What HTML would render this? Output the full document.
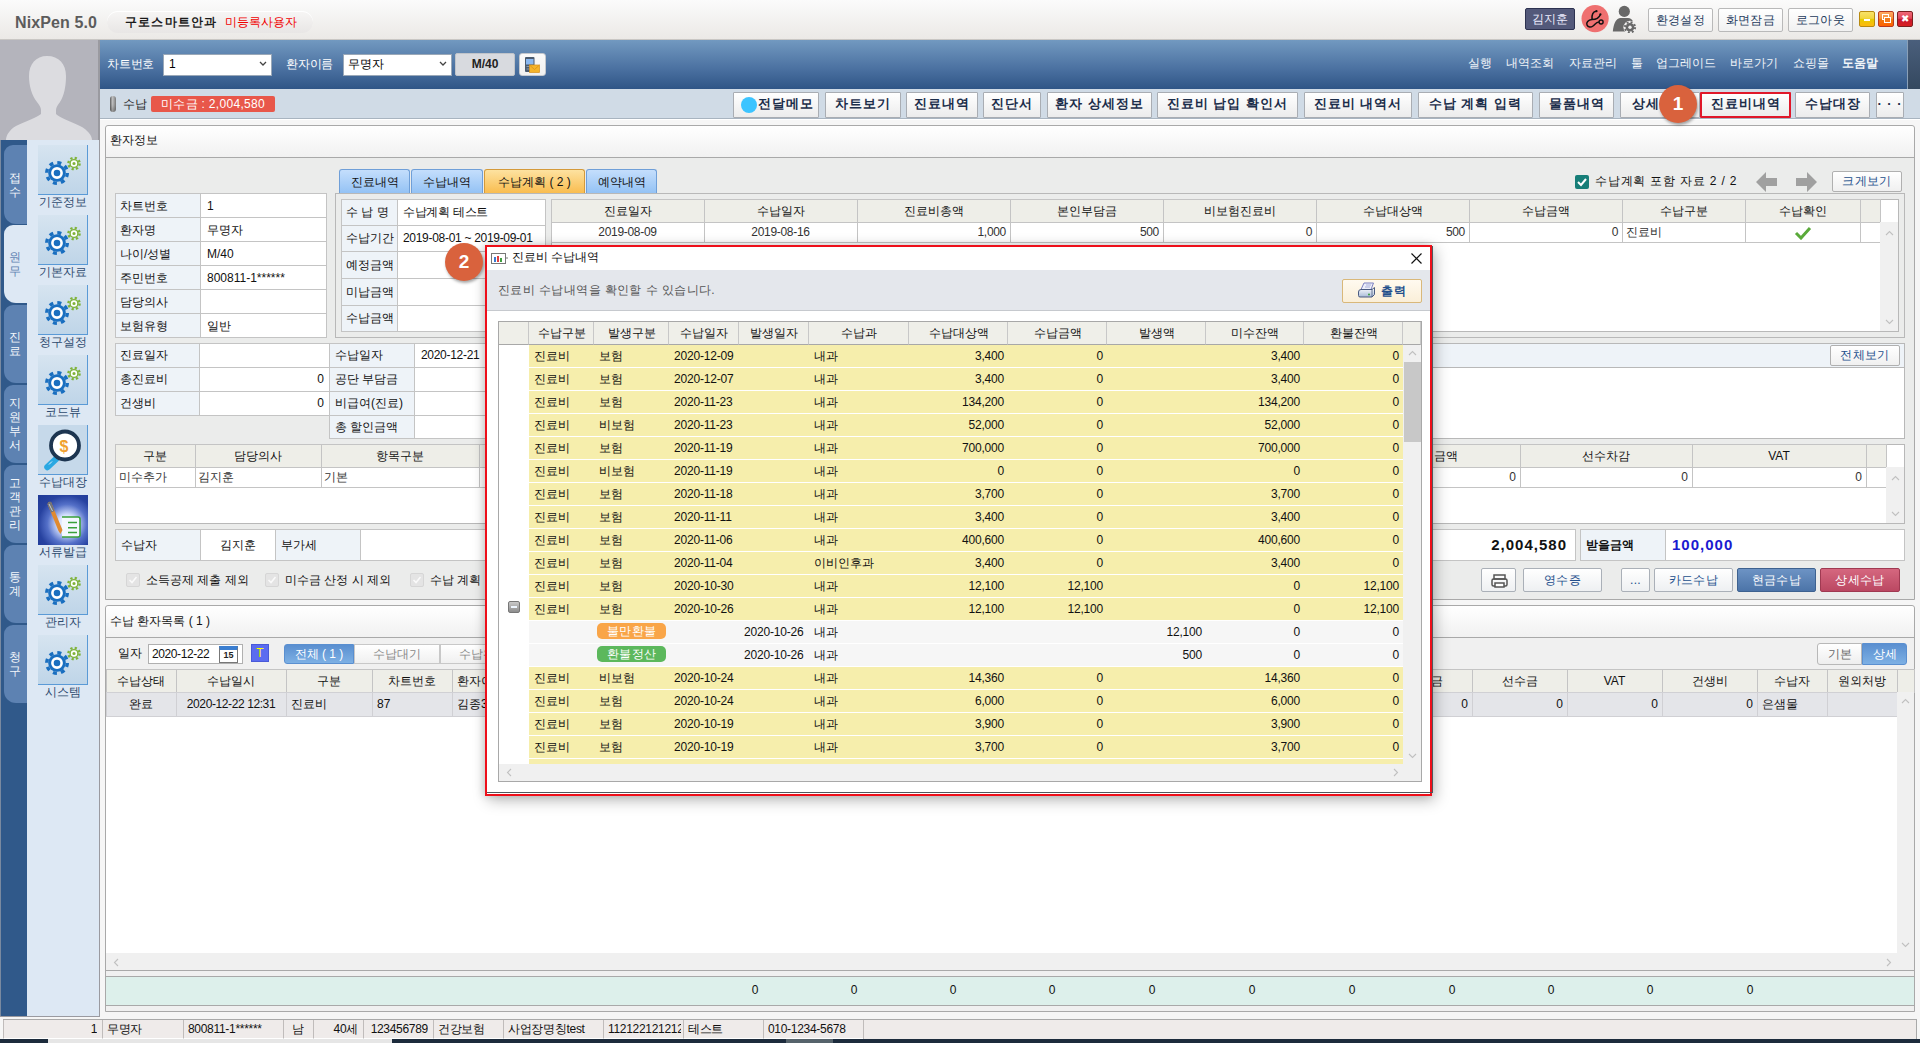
<!DOCTYPE html>
<html><head><meta charset="utf-8"><title>NixPen</title><style>*{box-sizing:border-box;margin:0;padding:0}
html,body{width:1920px;height:1043px;overflow:hidden}
body{position:relative;font-family:"Liberation Sans",sans-serif;font-size:12px;color:#222;background:#f6f6f6}
.a{position:absolute}
.t{white-space:nowrap}
.a>svg{display:block}
</style></head><body>
<div class="a" style="left:0px;top:119px;width:1920px;height:1px;background:#fff"></div>
<div class="a" style="left:100px;top:120px;width:1820px;height:919px;background:#f6f6f6"></div>
<div class="a" style="left:105px;top:125px;width:1810px;height:475px;background:#ebeceb;border:1px solid #a9a9a9;border-radius:3px 3px 0 0"></div>
<div class="a" style="left:106px;top:126px;width:1808px;height:32px;background:linear-gradient(#ffffff,#f1f1f1);border-bottom:1px solid #a9a9a9;border-radius:3px 3px 0 0"></div>
<div class="a t" style="left:110px;top:132.0px;height:16px;line-height:16px;font-size:12px;color:#111">환자정보</div>
<div class="a" style="left:115px;top:193px;width:86px;height:25px;background:#eef3f8;border:1px solid #c4c4c4;"></div>
<div class="a" style="left:200px;top:193px;width:127px;height:25px;background:#fff;border:1px solid #c4c4c4;"></div>
<div class="a t" style="left:120px;top:197.5px;height:16px;line-height:16px;font-size:12px;color:#111">차트번호</div>
<div class="a t" style="left:207px;top:197.5px;height:16px;line-height:16px;font-size:12px;color:#111">1</div>
<div class="a" style="left:115px;top:217px;width:86px;height:25px;background:#eef3f8;border:1px solid #c4c4c4;"></div>
<div class="a" style="left:200px;top:217px;width:127px;height:25px;background:#fff;border:1px solid #c4c4c4;"></div>
<div class="a t" style="left:120px;top:221.5px;height:16px;line-height:16px;font-size:12px;color:#111">환자명</div>
<div class="a t" style="left:207px;top:221.5px;height:16px;line-height:16px;font-size:12px;color:#111">무명자</div>
<div class="a" style="left:115px;top:241px;width:86px;height:25px;background:#eef3f8;border:1px solid #c4c4c4;"></div>
<div class="a" style="left:200px;top:241px;width:127px;height:25px;background:#fff;border:1px solid #c4c4c4;"></div>
<div class="a t" style="left:120px;top:245.5px;height:16px;line-height:16px;font-size:12px;color:#111">나이/성별</div>
<div class="a t" style="left:207px;top:245.5px;height:16px;line-height:16px;font-size:12px;color:#111">M/40</div>
<div class="a" style="left:115px;top:265px;width:86px;height:25px;background:#eef3f8;border:1px solid #c4c4c4;"></div>
<div class="a" style="left:200px;top:265px;width:127px;height:25px;background:#fff;border:1px solid #c4c4c4;"></div>
<div class="a t" style="left:120px;top:269.5px;height:16px;line-height:16px;font-size:12px;color:#111">주민번호</div>
<div class="a t" style="left:207px;top:269.5px;height:16px;line-height:16px;font-size:12px;color:#111">800811-1******</div>
<div class="a" style="left:115px;top:289px;width:86px;height:25px;background:#eef3f8;border:1px solid #c4c4c4;"></div>
<div class="a" style="left:200px;top:289px;width:127px;height:25px;background:#fff;border:1px solid #c4c4c4;"></div>
<div class="a t" style="left:120px;top:293.5px;height:16px;line-height:16px;font-size:12px;color:#111">담당의사</div>
<div class="a t" style="left:207px;top:293.5px;height:16px;line-height:16px;font-size:12px;color:#111"></div>
<div class="a" style="left:115px;top:313px;width:86px;height:25px;background:#eef3f8;border:1px solid #c4c4c4;"></div>
<div class="a" style="left:200px;top:313px;width:127px;height:25px;background:#fff;border:1px solid #c4c4c4;"></div>
<div class="a t" style="left:120px;top:317.5px;height:16px;line-height:16px;font-size:12px;color:#111">보험유형</div>
<div class="a t" style="left:207px;top:317.5px;height:16px;line-height:16px;font-size:12px;color:#111">일반</div>
<div class="a" style="left:339px;top:169px;width:71px;height:25px;background:linear-gradient(#c4defc,#92c1f4);border:1px solid #6f9fd8;border-bottom:none;border-radius:3px 3px 0 0"></div>
<div class="a t" style="left:339px;top:174.0px;width:71px;height:16px;line-height:16px;text-align:center;font-size:12px;color:#111">진료내역</div>
<div class="a" style="left:411px;top:169px;width:72px;height:25px;background:linear-gradient(#c4defc,#92c1f4);border:1px solid #6f9fd8;border-bottom:none;border-radius:3px 3px 0 0"></div>
<div class="a t" style="left:411px;top:174.0px;width:72px;height:16px;line-height:16px;text-align:center;font-size:12px;color:#111">수납내역</div>
<div class="a" style="left:484px;top:169px;width:101px;height:25px;background:linear-gradient(#fde2a0,#f9bb4c);border:1px solid #d49a3a;border-bottom:none;border-radius:3px 3px 0 0"></div>
<div class="a t" style="left:484px;top:174.0px;width:101px;height:16px;line-height:16px;text-align:center;font-size:12px;color:#111">수납계획 ( 2 )</div>
<div class="a" style="left:586px;top:169px;width:71px;height:25px;background:linear-gradient(#c4defc,#92c1f4);border:1px solid #6f9fd8;border-bottom:none;border-radius:3px 3px 0 0"></div>
<div class="a t" style="left:586px;top:174.0px;width:71px;height:16px;line-height:16px;text-align:center;font-size:12px;color:#111">예약내역</div>
<div class="a" style="left:335px;top:193px;width:1570px;height:145px;border:1px solid #b8b8b8;background:#ebeceb"></div>
<div class="a" style="left:341px;top:199px;width:57px;height:27px;background:#eef3f8;border:1px solid #c4c4c4;"></div>
<div class="a" style="left:397px;top:199px;width:149px;height:27px;background:#fff;border:1px solid #c4c4c4;"></div>
<div class="a t" style="left:346px;top:204.0px;height:16px;line-height:16px;font-size:12px;color:#111">수 납 명</div>
<div class="a t" style="left:403px;top:204.0px;height:16px;line-height:16px;font-size:12px;color:#111;letter-spacing:-0.3px">수납계획 테스트</div>
<div class="a" style="left:341px;top:225px;width:57px;height:27px;background:#eef3f8;border:1px solid #c4c4c4;"></div>
<div class="a" style="left:397px;top:225px;width:149px;height:27px;background:#fff;border:1px solid #c4c4c4;"></div>
<div class="a t" style="left:346px;top:230.0px;height:16px;line-height:16px;font-size:12px;color:#111">수납기간</div>
<div class="a t" style="left:403px;top:230.0px;height:16px;line-height:16px;font-size:12px;color:#111;letter-spacing:-0.3px">2019-08-01 ~ 2019-09-01</div>
<div class="a" style="left:341px;top:251px;width:57px;height:28px;background:#eef3f8;border:1px solid #c4c4c4;"></div>
<div class="a" style="left:397px;top:251px;width:149px;height:28px;background:#fff;border:1px solid #c4c4c4;"></div>
<div class="a t" style="left:346px;top:256.5px;height:16px;line-height:16px;font-size:12px;color:#111">예정금액</div>
<div class="a t" style="left:403px;top:256.5px;height:16px;line-height:16px;font-size:12px;color:#111;letter-spacing:-0.3px"></div>
<div class="a" style="left:341px;top:278px;width:57px;height:28px;background:#eef3f8;border:1px solid #c4c4c4;"></div>
<div class="a" style="left:397px;top:278px;width:149px;height:28px;background:#fff;border:1px solid #c4c4c4;"></div>
<div class="a t" style="left:346px;top:283.5px;height:16px;line-height:16px;font-size:12px;color:#111">미납금액</div>
<div class="a t" style="left:403px;top:283.5px;height:16px;line-height:16px;font-size:12px;color:#111;letter-spacing:-0.3px"></div>
<div class="a" style="left:341px;top:305px;width:57px;height:27px;background:#eef3f8;border:1px solid #c4c4c4;"></div>
<div class="a" style="left:397px;top:305px;width:149px;height:27px;background:#fff;border:1px solid #c4c4c4;"></div>
<div class="a t" style="left:346px;top:310.0px;height:16px;line-height:16px;font-size:12px;color:#111">수납금액</div>
<div class="a t" style="left:403px;top:310.0px;height:16px;line-height:16px;font-size:12px;color:#111;letter-spacing:-0.3px"></div>
<div class="a" style="left:551px;top:199px;width:1348px;height:133px;background:#fff;border:1px solid #b8b8b8"></div>
<div class="a" style="left:551px;top:199px;width:154px;height:24px;background:#eeeee8;border:1px solid #c4c4c4;"></div>
<div class="a t" style="left:551px;top:203.0px;width:153px;height:16px;line-height:16px;text-align:center;font-size:12px;color:#111">진료일자</div>
<div class="a" style="left:551px;top:222px;width:154px;height:21px;background:#fff;border:1px solid #c4c4c4;"></div>
<div class="a t" style="left:551px;top:224.0px;width:153px;height:16px;line-height:16px;text-align:center;font-size:12px;color:#333;letter-spacing:-0.3px">2019-08-09</div>
<div class="a" style="left:704px;top:199px;width:154px;height:24px;background:#eeeee8;border:1px solid #c4c4c4;"></div>
<div class="a t" style="left:704px;top:203.0px;width:153px;height:16px;line-height:16px;text-align:center;font-size:12px;color:#111">수납일자</div>
<div class="a" style="left:704px;top:222px;width:154px;height:21px;background:#fff;border:1px solid #c4c4c4;"></div>
<div class="a t" style="left:704px;top:224.0px;width:153px;height:16px;line-height:16px;text-align:center;font-size:12px;color:#333;letter-spacing:-0.3px">2019-08-16</div>
<div class="a" style="left:857px;top:199px;width:154px;height:24px;background:#eeeee8;border:1px solid #c4c4c4;"></div>
<div class="a t" style="left:857px;top:203.0px;width:153px;height:16px;line-height:16px;text-align:center;font-size:12px;color:#111">진료비총액</div>
<div class="a" style="left:857px;top:222px;width:154px;height:21px;background:#fff;border:1px solid #c4c4c4;"></div>
<div class="a t" style="left:806px;top:224.0px;width:200px;height:16px;line-height:16px;text-align:right;font-size:12px;color:#333;letter-spacing:-0.3px">1,000</div>
<div class="a" style="left:1010px;top:199px;width:154px;height:24px;background:#eeeee8;border:1px solid #c4c4c4;"></div>
<div class="a t" style="left:1010px;top:203.0px;width:153px;height:16px;line-height:16px;text-align:center;font-size:12px;color:#111">본인부담금</div>
<div class="a" style="left:1010px;top:222px;width:154px;height:21px;background:#fff;border:1px solid #c4c4c4;"></div>
<div class="a t" style="left:959px;top:224.0px;width:200px;height:16px;line-height:16px;text-align:right;font-size:12px;color:#333;letter-spacing:-0.3px">500</div>
<div class="a" style="left:1163px;top:199px;width:154px;height:24px;background:#eeeee8;border:1px solid #c4c4c4;"></div>
<div class="a t" style="left:1163px;top:203.0px;width:153px;height:16px;line-height:16px;text-align:center;font-size:12px;color:#111">비보험진료비</div>
<div class="a" style="left:1163px;top:222px;width:154px;height:21px;background:#fff;border:1px solid #c4c4c4;"></div>
<div class="a t" style="left:1112px;top:224.0px;width:200px;height:16px;line-height:16px;text-align:right;font-size:12px;color:#333;letter-spacing:-0.3px">0</div>
<div class="a" style="left:1316px;top:199px;width:154px;height:24px;background:#eeeee8;border:1px solid #c4c4c4;"></div>
<div class="a t" style="left:1316px;top:203.0px;width:153px;height:16px;line-height:16px;text-align:center;font-size:12px;color:#111">수납대상액</div>
<div class="a" style="left:1316px;top:222px;width:154px;height:21px;background:#fff;border:1px solid #c4c4c4;"></div>
<div class="a t" style="left:1265px;top:224.0px;width:200px;height:16px;line-height:16px;text-align:right;font-size:12px;color:#333;letter-spacing:-0.3px">500</div>
<div class="a" style="left:1469px;top:199px;width:154px;height:24px;background:#eeeee8;border:1px solid #c4c4c4;"></div>
<div class="a t" style="left:1469px;top:203.0px;width:153px;height:16px;line-height:16px;text-align:center;font-size:12px;color:#111">수납금액</div>
<div class="a" style="left:1469px;top:222px;width:154px;height:21px;background:#fff;border:1px solid #c4c4c4;"></div>
<div class="a t" style="left:1418px;top:224.0px;width:200px;height:16px;line-height:16px;text-align:right;font-size:12px;color:#333;letter-spacing:-0.3px">0</div>
<div class="a" style="left:1622px;top:199px;width:124px;height:24px;background:#eeeee8;border:1px solid #c4c4c4;"></div>
<div class="a t" style="left:1622px;top:203.0px;width:123px;height:16px;line-height:16px;text-align:center;font-size:12px;color:#111">수납구분</div>
<div class="a" style="left:1622px;top:222px;width:124px;height:21px;background:#fff;border:1px solid #c4c4c4;"></div>
<div class="a t" style="left:1626px;top:224.0px;height:16px;line-height:16px;font-size:12px;color:#333">진료비</div>
<div class="a" style="left:1745px;top:199px;width:116px;height:24px;background:#eeeee8;border:1px solid #c4c4c4;"></div>
<div class="a t" style="left:1745px;top:203.0px;width:115px;height:16px;line-height:16px;text-align:center;font-size:12px;color:#111">수납확인</div>
<div class="a" style="left:1745px;top:222px;width:116px;height:21px;background:#fff;border:1px solid #c4c4c4;"></div>
<div class="a t" style="left:1745px;top:224.0px;width:115px;height:16px;line-height:16px;text-align:center;font-size:12px;color:#333;letter-spacing:-0.3px"></div>
<div class="a" style="left:1860px;top:199px;width:21px;height:24px;background:#eeeee8;border:1px solid #c4c4c4;"></div>
<div class="a t" style="left:1860px;top:203.0px;width:20px;height:16px;line-height:16px;text-align:center;font-size:12px;color:#111"></div>
<div class="a" style="left:1860px;top:222px;width:21px;height:21px;background:#fff;border:1px solid #c4c4c4;"></div>
<div class="a t" style="left:1860px;top:224.0px;width:20px;height:16px;line-height:16px;text-align:center;font-size:12px;color:#333;letter-spacing:-0.3px"></div>
<svg class="a" style="left:1794px;top:225px" width="18" height="15" viewBox="0 0 18 15"><path d="M2 8 L7 13 L16 3" fill="none" stroke="#5aaa3a" stroke-width="3"/></svg>
<div class="a" style="left:1880px;top:222px;width:18px;height:109px;background:#f0f0f0"></div>
<svg class="a" style="left:1884.5px;top:230.0px" width="9" height="6" viewBox="0 0 9 6"><path d="M1 5 L4.5 1.5 L8 5" fill="none" stroke="#c0c0c0" stroke-width="1.1"/></svg>
<svg class="a" style="left:1884.5px;top:319.0px" width="9" height="6" viewBox="0 0 9 6"><path d="M1 1 L4.5 4.5 L8 1" fill="none" stroke="#c0c0c0" stroke-width="1.1"/></svg>
<div class="a" style="left:1575px;top:175px;width:14px;height:14px;background:#167e78;border-radius:2px"><svg width="14" height="14" viewBox="0 0 14 14"><path d="M3 7 L6 10 L11 4" fill="none" stroke="#fff" stroke-width="2"/></svg></div>
<div class="a t" style="left:1595px;top:173.0px;height:16px;line-height:16px;font-size:12px;color:#111;letter-spacing:0.8px">수납계획 포함 자료 2 / 2</div>
<svg class="a" style="left:1756px;top:172px" width="22" height="20" viewBox="0 0 22 20"><path d="M0 10 L10 0 L10 6 L21 6 L21 14 L10 14 L10 20 Z" fill="#a0a0a0"/></svg>
<svg class="a" style="left:1795px;top:172px" width="22" height="20" viewBox="0 0 22 20"><path d="M22 10 L12 0 L12 6 L1 6 L1 14 L12 14 L12 20 Z" fill="#a0a0a0"/></svg>
<div class="a" style="left:1832px;top:171px;width:70px;height:21px;background:linear-gradient(#fff,#f0f0f0);border:1px solid #b0b0b0;border-radius:2px"></div>
<div class="a t" style="left:1832px;top:173.0px;width:70px;height:16px;line-height:16px;text-align:center;font-size:12px;color:#234f8c;letter-spacing:0.3px">크게보기</div>
<div class="a" style="left:115px;top:343px;width:85px;height:25px;background:#eef3f8;border:1px solid #c4c4c4;"></div>
<div class="a" style="left:199px;top:343px;width:131px;height:25px;background:#fff;border:1px solid #c4c4c4;"></div>
<div class="a t" style="left:120px;top:347.0px;height:16px;line-height:16px;font-size:12px;color:#111">진료일자</div>
<div class="a" style="left:115px;top:367px;width:85px;height:25px;background:#eef3f8;border:1px solid #c4c4c4;"></div>
<div class="a" style="left:199px;top:367px;width:131px;height:25px;background:#fff;border:1px solid #c4c4c4;"></div>
<div class="a t" style="left:120px;top:371.0px;height:16px;line-height:16px;font-size:12px;color:#111">총진료비</div>
<div class="a t" style="left:124px;top:371.0px;width:200px;height:16px;line-height:16px;text-align:right;font-size:12px;color:#111">0</div>
<div class="a" style="left:115px;top:391px;width:85px;height:25px;background:#eef3f8;border:1px solid #c4c4c4;"></div>
<div class="a" style="left:199px;top:391px;width:131px;height:25px;background:#fff;border:1px solid #c4c4c4;"></div>
<div class="a t" style="left:120px;top:395.0px;height:16px;line-height:16px;font-size:12px;color:#111">건생비</div>
<div class="a t" style="left:124px;top:395.0px;width:200px;height:16px;line-height:16px;text-align:right;font-size:12px;color:#111">0</div>
<div class="a" style="left:329px;top:343px;width:86px;height:25px;background:#eef3f8;border:1px solid #c4c4c4;"></div>
<div class="a" style="left:414px;top:343px;width:107px;height:25px;background:#fff;border:1px solid #c4c4c4;"></div>
<div class="a t" style="left:335px;top:347.0px;height:16px;line-height:16px;font-size:12px;color:#111">수납일자</div>
<div class="a t" style="left:421px;top:347.0px;height:16px;line-height:16px;font-size:12px;color:#111;letter-spacing:-0.3px">2020-12-21</div>
<div class="a" style="left:329px;top:367px;width:86px;height:25px;background:#eef3f8;border:1px solid #c4c4c4;"></div>
<div class="a" style="left:414px;top:367px;width:107px;height:25px;background:#fff;border:1px solid #c4c4c4;"></div>
<div class="a t" style="left:335px;top:371.0px;height:16px;line-height:16px;font-size:12px;color:#111">공단 부담금</div>
<div class="a" style="left:329px;top:391px;width:86px;height:25px;background:#eef3f8;border:1px solid #c4c4c4;"></div>
<div class="a" style="left:414px;top:391px;width:107px;height:25px;background:#fff;border:1px solid #c4c4c4;"></div>
<div class="a t" style="left:335px;top:395.0px;height:16px;line-height:16px;font-size:12px;color:#111">비급여(진료)</div>
<div class="a" style="left:329px;top:415px;width:86px;height:24px;background:#eef3f8;border:1px solid #c4c4c4;"></div>
<div class="a" style="left:414px;top:415px;width:107px;height:24px;background:#fff;border:1px solid #c4c4c4;"></div>
<div class="a t" style="left:335px;top:418.5px;height:16px;line-height:16px;font-size:12px;color:#111">총 할인금액</div>
<div class="a" style="left:900px;top:343px;width:1005px;height:96px;background:#fff;border:1px solid #b8b8b8"></div>
<div class="a" style="left:901px;top:344px;width:1003px;height:24px;background:#eef3f8;border-bottom:1px solid #b8b8b8"></div>
<div class="a" style="left:1830px;top:345px;width:70px;height:21px;background:linear-gradient(#fff,#f0f0f0);border:1px solid #b0b0b0;border-radius:2px"></div>
<div class="a t" style="left:1830px;top:347.0px;width:70px;height:16px;line-height:16px;text-align:center;font-size:12px;color:#234f8c;letter-spacing:0.3px">전체보기</div>
<div class="a" style="left:115px;top:444px;width:1790px;height:80px;background:#fff;border:1px solid #b8b8b8"></div>
<div class="a" style="left:115px;top:444px;width:81px;height:24px;background:#eeeee8;border:1px solid #c4c4c4;"></div>
<div class="a t" style="left:115px;top:448.0px;width:80px;height:16px;line-height:16px;text-align:center;font-size:12px;color:#111">구분</div>
<div class="a" style="left:115px;top:467px;width:81px;height:21px;background:#fff;border:1px solid #c4c4c4;"></div>
<div class="a" style="left:195px;top:444px;width:127px;height:24px;background:#eeeee8;border:1px solid #c4c4c4;"></div>
<div class="a t" style="left:195px;top:448.0px;width:126px;height:16px;line-height:16px;text-align:center;font-size:12px;color:#111">담당의사</div>
<div class="a" style="left:195px;top:467px;width:127px;height:21px;background:#fff;border:1px solid #c4c4c4;"></div>
<div class="a" style="left:321px;top:444px;width:159px;height:24px;background:#eeeee8;border:1px solid #c4c4c4;"></div>
<div class="a t" style="left:321px;top:448.0px;width:158px;height:16px;line-height:16px;text-align:center;font-size:12px;color:#111">항목구분</div>
<div class="a" style="left:321px;top:467px;width:159px;height:21px;background:#fff;border:1px solid #c4c4c4;"></div>
<div class="a" style="left:479px;top:444px;width:177px;height:24px;background:#eeeee8;border:1px solid #c4c4c4;"></div>
<div class="a t" style="left:479px;top:448.0px;width:176px;height:16px;line-height:16px;text-align:center;font-size:12px;color:#111"></div>
<div class="a" style="left:479px;top:467px;width:177px;height:21px;background:#fff;border:1px solid #c4c4c4;"></div>
<div class="a" style="left:655px;top:444px;width:174px;height:24px;background:#eeeee8;border:1px solid #c4c4c4;"></div>
<div class="a t" style="left:655px;top:448.0px;width:173px;height:16px;line-height:16px;text-align:center;font-size:12px;color:#111"></div>
<div class="a" style="left:655px;top:467px;width:174px;height:21px;background:#fff;border:1px solid #c4c4c4;"></div>
<div class="a" style="left:828px;top:444px;width:174px;height:24px;background:#eeeee8;border:1px solid #c4c4c4;"></div>
<div class="a t" style="left:828px;top:448.0px;width:173px;height:16px;line-height:16px;text-align:center;font-size:12px;color:#111"></div>
<div class="a" style="left:828px;top:467px;width:174px;height:21px;background:#fff;border:1px solid #c4c4c4;"></div>
<div class="a" style="left:1001px;top:444px;width:174px;height:24px;background:#eeeee8;border:1px solid #c4c4c4;"></div>
<div class="a t" style="left:1001px;top:448.0px;width:173px;height:16px;line-height:16px;text-align:center;font-size:12px;color:#111"></div>
<div class="a" style="left:1001px;top:467px;width:174px;height:21px;background:#fff;border:1px solid #c4c4c4;"></div>
<div class="a" style="left:1174px;top:444px;width:174px;height:24px;background:#eeeee8;border:1px solid #c4c4c4;"></div>
<div class="a t" style="left:1174px;top:448.0px;width:173px;height:16px;line-height:16px;text-align:center;font-size:12px;color:#111"></div>
<div class="a" style="left:1174px;top:467px;width:174px;height:21px;background:#fff;border:1px solid #c4c4c4;"></div>
<div class="a" style="left:1347px;top:444px;width:174px;height:24px;background:#eeeee8;border:1px solid #c4c4c4;"></div>
<div class="a t" style="left:1347px;top:448.0px;width:173px;height:16px;line-height:16px;text-align:center;font-size:12px;color:#111">할인금액</div>
<div class="a" style="left:1347px;top:467px;width:174px;height:21px;background:#fff;border:1px solid #c4c4c4;"></div>
<div class="a" style="left:1520px;top:444px;width:173px;height:24px;background:#eeeee8;border:1px solid #c4c4c4;"></div>
<div class="a t" style="left:1520px;top:448.0px;width:172px;height:16px;line-height:16px;text-align:center;font-size:12px;color:#111">선수차감</div>
<div class="a" style="left:1520px;top:467px;width:173px;height:21px;background:#fff;border:1px solid #c4c4c4;"></div>
<div class="a" style="left:1692px;top:444px;width:175px;height:24px;background:#eeeee8;border:1px solid #c4c4c4;"></div>
<div class="a t" style="left:1692px;top:448.0px;width:174px;height:16px;line-height:16px;text-align:center;font-size:12px;color:#111">VAT</div>
<div class="a" style="left:1692px;top:467px;width:175px;height:21px;background:#fff;border:1px solid #c4c4c4;"></div>
<div class="a" style="left:1866px;top:444px;width:21px;height:24px;background:#eeeee8;border:1px solid #c4c4c4;"></div>
<div class="a t" style="left:1866px;top:448.0px;width:20px;height:16px;line-height:16px;text-align:center;font-size:12px;color:#111"></div>
<div class="a" style="left:1866px;top:467px;width:21px;height:21px;background:#fff;border:1px solid #c4c4c4;"></div>
<div class="a t" style="left:119px;top:469.0px;height:16px;line-height:16px;font-size:12px;color:#333">미수추가</div>
<div class="a t" style="left:198px;top:469.0px;height:16px;line-height:16px;font-size:12px;color:#333">김지훈</div>
<div class="a t" style="left:324px;top:469.0px;height:16px;line-height:16px;font-size:12px;color:#333">기본</div>
<div class="a t" style="left:1316px;top:469.0px;width:200px;height:16px;line-height:16px;text-align:right;font-size:12px;color:#333">0</div>
<div class="a t" style="left:1488px;top:469.0px;width:200px;height:16px;line-height:16px;text-align:right;font-size:12px;color:#333">0</div>
<div class="a t" style="left:1662px;top:469.0px;width:200px;height:16px;line-height:16px;text-align:right;font-size:12px;color:#333">0</div>
<div class="a" style="left:1886px;top:467px;width:18px;height:56px;background:#f0f0f0"></div>
<svg class="a" style="left:1890.5px;top:475.0px" width="9" height="6" viewBox="0 0 9 6"><path d="M1 5 L4.5 1.5 L8 5" fill="none" stroke="#c0c0c0" stroke-width="1.1"/></svg>
<svg class="a" style="left:1890.5px;top:511.0px" width="9" height="6" viewBox="0 0 9 6"><path d="M1 1 L4.5 4.5 L8 1" fill="none" stroke="#c0c0c0" stroke-width="1.1"/></svg>
<div class="a" style="left:115px;top:529px;width:86px;height:32px;background:#eef3f8;border:1px solid #c4c4c4;"></div>
<div class="a t" style="left:121px;top:537.0px;height:16px;line-height:16px;font-size:12px;color:#111">수납자</div>
<div class="a" style="left:200px;top:529px;width:76px;height:32px;background:#fff;border:1px solid #c4c4c4;"></div>
<div class="a t" style="left:200px;top:537.0px;width:75px;height:16px;line-height:16px;text-align:center;font-size:12px;color:#111">김지훈</div>
<div class="a" style="left:275px;top:529px;width:86px;height:32px;background:#eef3f8;border:1px solid #c4c4c4;"></div>
<div class="a t" style="left:281px;top:537.0px;height:16px;line-height:16px;font-size:12px;color:#111">부가세</div>
<div class="a" style="left:360px;top:529px;width:1216px;height:32px;background:#fff;border:1px solid #c4c4c4;"></div>
<div class="a t" style="left:1267px;top:535.0px;width:300px;height:20px;line-height:20px;text-align:right;font-size:15px;font-weight:bold;color:#111;letter-spacing:1px">2,004,580</div>
<div class="a" style="left:1580px;top:529px;width:86px;height:32px;background:#eef3f8;border:1px solid #c4c4c4;"></div>
<div class="a t" style="left:1586px;top:537.0px;height:16px;line-height:16px;font-size:12px;font-weight:bold;color:#111">받을금액</div>
<div class="a" style="left:1665px;top:529px;width:240px;height:32px;background:#fff;border:1px solid #c4c4c4;"></div>
<div class="a t" style="left:1672px;top:535.0px;height:20px;line-height:20px;font-size:15px;font-weight:bold;color:#1a1ad0;letter-spacing:1px">100,000</div>
<div class="a" style="left:126px;top:573px;width:14px;height:14px;background:#e4e4e4;border:1px solid #d6d6d6;border-radius:2px"><svg width="12" height="12" viewBox="0 0 12 12"><path d="M2.5 6 L5 8.5 L9.5 3" fill="none" stroke="#fafafa" stroke-width="1.6"/></svg></div>
<div class="a t" style="left:146px;top:572.0px;height:16px;line-height:16px;font-size:12px;color:#111;letter-spacing:0px">소득공제 제출 제외</div>
<div class="a" style="left:265px;top:573px;width:14px;height:14px;background:#e4e4e4;border:1px solid #d6d6d6;border-radius:2px"><svg width="12" height="12" viewBox="0 0 12 12"><path d="M2.5 6 L5 8.5 L9.5 3" fill="none" stroke="#fafafa" stroke-width="1.6"/></svg></div>
<div class="a t" style="left:285px;top:572.0px;height:16px;line-height:16px;font-size:12px;color:#111;letter-spacing:0px">미수금 산정 시 제외</div>
<div class="a" style="left:410px;top:573px;width:14px;height:14px;background:#e4e4e4;border:1px solid #d6d6d6;border-radius:2px"><svg width="12" height="12" viewBox="0 0 12 12"><path d="M2.5 6 L5 8.5 L9.5 3" fill="none" stroke="#fafafa" stroke-width="1.6"/></svg></div>
<div class="a t" style="left:430px;top:572.0px;height:16px;line-height:16px;font-size:12px;color:#111;letter-spacing:0px">수납 계획</div>
<div class="a" style="left:1481px;top:568px;width:35px;height:24px;background:linear-gradient(#fff,#eef0f2);border:1px solid #aab0b8;border-radius:2px"><svg width="35" height="24" viewBox="0 0 35 24"><rect x="12" y="6" width="11" height="4" fill="none" stroke="#555" stroke-width="1.5"/><rect x="10" y="10" width="15" height="7" rx="1.5" fill="none" stroke="#555" stroke-width="1.5"/><rect x="13" y="14" width="9" height="4" fill="#fff" stroke="#555" stroke-width="1.5"/></svg></div>
<div class="a" style="left:1523px;top:568px;width:79px;height:24px;background:linear-gradient(#fff,#eef0f2);border:1px solid #aab0b8;border-radius:2px"></div>
<div class="a t" style="left:1523px;top:572.0px;width:79px;height:16px;line-height:16px;text-align:center;font-size:12px;color:#234f8c;letter-spacing:0.3px">영수증</div>
<div class="a" style="left:1621px;top:568px;width:29px;height:24px;background:linear-gradient(#fff,#eef0f2);border:1px solid #aab0b8;border-radius:2px"></div>
<div class="a t" style="left:1621px;top:572.0px;width:29px;height:16px;line-height:16px;text-align:center;font-size:12px;color:#234f8c;letter-spacing:0.3px">...</div>
<div class="a" style="left:1654px;top:568px;width:79px;height:24px;background:linear-gradient(#fff,#eef0f2);border:1px solid #aab0b8;border-radius:2px"></div>
<div class="a t" style="left:1654px;top:572.0px;width:79px;height:16px;line-height:16px;text-align:center;font-size:12px;color:#234f8c;letter-spacing:0.3px">카드수납</div>
<div class="a" style="left:1737px;top:568px;width:79px;height:24px;background:linear-gradient(#6d93c4,#4c74a8);border:1px solid #3e6290;border-radius:2px"></div>
<div class="a t" style="left:1737px;top:572.0px;width:79px;height:16px;line-height:16px;text-align:center;font-size:12px;color:#fff;letter-spacing:0.3px">현금수납</div>
<div class="a" style="left:1820px;top:568px;width:80px;height:24px;background:linear-gradient(#d5677f,#bb4862);border:1px solid #a03a52;border-radius:2px"></div>
<div class="a t" style="left:1820px;top:572.0px;width:80px;height:16px;line-height:16px;text-align:center;font-size:12px;color:#fff;letter-spacing:0.3px">상세수납</div>
<div class="a" style="left:105px;top:605px;width:1810px;height:407px;background:#f0f0f0;border:1px solid #a9a9a9;border-radius:3px 3px 0 0"></div>
<div class="a" style="left:106px;top:606px;width:1808px;height:32px;background:linear-gradient(#ffffff,#f1f1f1);border-bottom:1px solid #a9a9a9;border-radius:3px 3px 0 0"></div>
<div class="a t" style="left:110px;top:613.0px;height:16px;line-height:16px;font-size:12px;color:#111">수납 환자목록 ( 1 )</div>
<div class="a t" style="left:118px;top:645.0px;height:16px;line-height:16px;font-size:12px;color:#111">일자</div>
<div class="a" style="left:148px;top:644px;width:95px;height:20px;background:#fff;border:1px solid #b0b0b0"></div>
<div class="a t" style="left:152px;top:646.0px;height:16px;line-height:16px;font-size:12px;color:#111;letter-spacing:-0.4px">2020-12-22</div>
<div class="a" style="left:219px;top:646px;width:19px;height:17px;background:#fff;border:1px solid #777;border-top:4px solid #3a7ed0"><div style="font-size:9px;line-height:11px;text-align:center;color:#222;font-weight:bold">15</div></div>
<div class="a" style="left:251px;top:644px;width:18px;height:18px;background:#5b6cf0;border:1px solid #4a5ad8"></div>
<div class="a t" style="left:251px;top:645.0px;width:18px;height:16px;line-height:16px;text-align:center;font-size:12px;color:#ffff00">T</div>
<div class="a" style="left:284px;top:644px;width:70px;height:20px;background:linear-gradient(#5a8fd0,#7db0e4);border:1px solid #5a8fd0;border-radius:3px 0 0 3px"></div>
<div class="a t" style="left:284px;top:646.0px;width:70px;height:16px;line-height:16px;text-align:center;font-size:12px;color:#fff">전체 ( 1 )</div>
<div class="a" style="left:354px;top:644px;width:86px;height:20px;background:linear-gradient(#fff,#f0f0f0);border:1px solid #c8c8c8"></div>
<div class="a t" style="left:354px;top:646.0px;width:86px;height:16px;line-height:16px;text-align:center;font-size:12px;color:#888">수납대기</div>
<div class="a" style="left:440px;top:644px;width:86px;height:20px;background:linear-gradient(#fff,#f0f0f0);border:1px solid #c8c8c8"></div>
<div class="a t" style="left:440px;top:646.0px;width:86px;height:16px;line-height:16px;text-align:center;font-size:12px;color:#888">수납완료</div>
<div class="a" style="left:1817px;top:643px;width:45px;height:22px;background:linear-gradient(#fff,#eee);border:1px solid #b8b8b8;border-radius:3px 0 0 3px"></div>
<div class="a t" style="left:1817px;top:646.0px;width:45px;height:16px;line-height:16px;text-align:center;font-size:12px;color:#666">기본</div>
<div class="a" style="left:1862px;top:643px;width:45px;height:22px;background:linear-gradient(#5a8fd0,#7db0e4);border:1px solid #5a8fd0;border-radius:0 3px 3px 0"></div>
<div class="a t" style="left:1862px;top:646.0px;width:45px;height:16px;line-height:16px;text-align:center;font-size:12px;color:#fff">상세</div>
<div class="a" style="left:106px;top:669px;width:1808px;height:285px;background:#fff"></div>
<div class="a" style="left:106px;top:669px;width:71px;height:24px;background:#eeeee8;border:1px solid #c4c4c4;"></div>
<div class="a t" style="left:106px;top:673.0px;width:70px;height:16px;line-height:16px;text-align:center;font-size:12px;color:#111">수납상태</div>
<div class="a" style="left:106px;top:692px;width:71px;height:25px;background:#e4e5e9;border:1px solid #d0d0d4;"></div>
<div class="a" style="left:176px;top:669px;width:111px;height:24px;background:#eeeee8;border:1px solid #c4c4c4;"></div>
<div class="a t" style="left:176px;top:673.0px;width:110px;height:16px;line-height:16px;text-align:center;font-size:12px;color:#111">수납일시</div>
<div class="a" style="left:176px;top:692px;width:111px;height:25px;background:#e4e5e9;border:1px solid #d0d0d4;"></div>
<div class="a" style="left:286px;top:669px;width:87px;height:24px;background:#eeeee8;border:1px solid #c4c4c4;"></div>
<div class="a t" style="left:286px;top:673.0px;width:86px;height:16px;line-height:16px;text-align:center;font-size:12px;color:#111">구분</div>
<div class="a" style="left:286px;top:692px;width:87px;height:25px;background:#e4e5e9;border:1px solid #d0d0d4;"></div>
<div class="a" style="left:372px;top:669px;width:81px;height:24px;background:#eeeee8;border:1px solid #c4c4c4;"></div>
<div class="a t" style="left:372px;top:673.0px;width:80px;height:16px;line-height:16px;text-align:center;font-size:12px;color:#111">차트번호</div>
<div class="a" style="left:372px;top:692px;width:81px;height:25px;background:#e4e5e9;border:1px solid #d0d0d4;"></div>
<div class="a" style="left:452px;top:669px;width:59px;height:24px;background:#eeeee8;border:1px solid #c4c4c4;"></div>
<div class="a t" style="left:452px;top:673.0px;width:58px;height:16px;line-height:16px;text-align:center;font-size:12px;color:#111">환자이름</div>
<div class="a" style="left:452px;top:692px;width:59px;height:25px;background:#e4e5e9;border:1px solid #d0d0d4;"></div>
<div class="a" style="left:510px;top:669px;width:171px;height:24px;background:#eeeee8;border:1px solid #c4c4c4;"></div>
<div class="a t" style="left:510px;top:673.0px;width:170px;height:16px;line-height:16px;text-align:center;font-size:12px;color:#111"></div>
<div class="a" style="left:510px;top:692px;width:171px;height:25px;background:#e4e5e9;border:1px solid #d0d0d4;"></div>
<div class="a" style="left:680px;top:669px;width:121px;height:24px;background:#eeeee8;border:1px solid #c4c4c4;"></div>
<div class="a t" style="left:680px;top:673.0px;width:120px;height:16px;line-height:16px;text-align:center;font-size:12px;color:#111"></div>
<div class="a" style="left:680px;top:692px;width:121px;height:25px;background:#e4e5e9;border:1px solid #d0d0d4;"></div>
<div class="a" style="left:800px;top:669px;width:121px;height:24px;background:#eeeee8;border:1px solid #c4c4c4;"></div>
<div class="a t" style="left:800px;top:673.0px;width:120px;height:16px;line-height:16px;text-align:center;font-size:12px;color:#111"></div>
<div class="a" style="left:800px;top:692px;width:121px;height:25px;background:#e4e5e9;border:1px solid #d0d0d4;"></div>
<div class="a" style="left:920px;top:669px;width:121px;height:24px;background:#eeeee8;border:1px solid #c4c4c4;"></div>
<div class="a t" style="left:920px;top:673.0px;width:120px;height:16px;line-height:16px;text-align:center;font-size:12px;color:#111"></div>
<div class="a" style="left:920px;top:692px;width:121px;height:25px;background:#e4e5e9;border:1px solid #d0d0d4;"></div>
<div class="a" style="left:1040px;top:669px;width:121px;height:24px;background:#eeeee8;border:1px solid #c4c4c4;"></div>
<div class="a t" style="left:1040px;top:673.0px;width:120px;height:16px;line-height:16px;text-align:center;font-size:12px;color:#111"></div>
<div class="a" style="left:1040px;top:692px;width:121px;height:25px;background:#e4e5e9;border:1px solid #d0d0d4;"></div>
<div class="a" style="left:1160px;top:669px;width:121px;height:24px;background:#eeeee8;border:1px solid #c4c4c4;"></div>
<div class="a t" style="left:1160px;top:673.0px;width:120px;height:16px;line-height:16px;text-align:center;font-size:12px;color:#111"></div>
<div class="a" style="left:1160px;top:692px;width:121px;height:25px;background:#e4e5e9;border:1px solid #d0d0d4;"></div>
<div class="a" style="left:1280px;top:669px;width:98px;height:24px;background:#eeeee8;border:1px solid #c4c4c4;"></div>
<div class="a t" style="left:1280px;top:673.0px;width:97px;height:16px;line-height:16px;text-align:center;font-size:12px;color:#111"></div>
<div class="a" style="left:1280px;top:692px;width:98px;height:25px;background:#e4e5e9;border:1px solid #d0d0d4;"></div>
<div class="a" style="left:1377px;top:669px;width:96px;height:24px;background:#eeeee8;border:1px solid #c4c4c4;"></div>
<div class="a t" style="left:1377px;top:673.0px;width:95px;height:16px;line-height:16px;text-align:center;font-size:12px;color:#111">수납금</div>
<div class="a" style="left:1377px;top:692px;width:96px;height:25px;background:#e4e5e9;border:1px solid #d0d0d4;"></div>
<div class="a" style="left:1472px;top:669px;width:96px;height:24px;background:#eeeee8;border:1px solid #c4c4c4;"></div>
<div class="a t" style="left:1472px;top:673.0px;width:95px;height:16px;line-height:16px;text-align:center;font-size:12px;color:#111">선수금</div>
<div class="a" style="left:1472px;top:692px;width:96px;height:25px;background:#e4e5e9;border:1px solid #d0d0d4;"></div>
<div class="a" style="left:1567px;top:669px;width:96px;height:24px;background:#eeeee8;border:1px solid #c4c4c4;"></div>
<div class="a t" style="left:1567px;top:673.0px;width:95px;height:16px;line-height:16px;text-align:center;font-size:12px;color:#111">VAT</div>
<div class="a" style="left:1567px;top:692px;width:96px;height:25px;background:#e4e5e9;border:1px solid #d0d0d4;"></div>
<div class="a" style="left:1662px;top:669px;width:96px;height:24px;background:#eeeee8;border:1px solid #c4c4c4;"></div>
<div class="a t" style="left:1662px;top:673.0px;width:95px;height:16px;line-height:16px;text-align:center;font-size:12px;color:#111">건생비</div>
<div class="a" style="left:1662px;top:692px;width:96px;height:25px;background:#e4e5e9;border:1px solid #d0d0d4;"></div>
<div class="a" style="left:1757px;top:669px;width:71px;height:24px;background:#eeeee8;border:1px solid #c4c4c4;"></div>
<div class="a t" style="left:1757px;top:673.0px;width:70px;height:16px;line-height:16px;text-align:center;font-size:12px;color:#111">수납자</div>
<div class="a" style="left:1757px;top:692px;width:71px;height:25px;background:#e4e5e9;border:1px solid #d0d0d4;"></div>
<div class="a" style="left:1827px;top:669px;width:71px;height:24px;background:#eeeee8;border:1px solid #c4c4c4;"></div>
<div class="a t" style="left:1827px;top:673.0px;width:70px;height:16px;line-height:16px;text-align:center;font-size:12px;color:#111">원외처방</div>
<div class="a" style="left:1827px;top:692px;width:71px;height:25px;background:#e4e5e9;border:1px solid #d0d0d4;"></div>
<div class="a" style="left:1897px;top:669px;width:18px;height:24px;background:#eeeee8;border:1px solid #c4c4c4;"></div>
<div class="a t" style="left:106px;top:696.0px;width:70px;height:16px;line-height:16px;text-align:center;font-size:12px;color:#111">완료</div>
<div class="a t" style="left:176px;top:696.0px;width:110px;height:16px;line-height:16px;text-align:center;font-size:12px;color:#111;letter-spacing:-0.4px">2020-12-22 12:31</div>
<div class="a t" style="left:291px;top:696.0px;height:16px;line-height:16px;font-size:12px;color:#111">진료비</div>
<div class="a t" style="left:377px;top:696.0px;height:16px;line-height:16px;font-size:12px;color:#111">87</div>
<div class="a t" style="left:457px;top:696.0px;height:16px;line-height:16px;font-size:12px;color:#111">김종3</div>
<div class="a t" style="left:1268px;top:696.0px;width:200px;height:16px;line-height:16px;text-align:right;font-size:12px;color:#111">0</div>
<div class="a t" style="left:1363px;top:696.0px;width:200px;height:16px;line-height:16px;text-align:right;font-size:12px;color:#111">0</div>
<div class="a t" style="left:1458px;top:696.0px;width:200px;height:16px;line-height:16px;text-align:right;font-size:12px;color:#111">0</div>
<div class="a t" style="left:1553px;top:696.0px;width:200px;height:16px;line-height:16px;text-align:right;font-size:12px;color:#111">0</div>
<div class="a t" style="left:1762px;top:696.0px;height:16px;line-height:16px;font-size:12px;color:#111">은샘물</div>
<div class="a" style="left:1897px;top:692px;width:17px;height:262px;background:#f0f0f0"></div>
<svg class="a" style="left:1901.0px;top:698.0px" width="9" height="6" viewBox="0 0 9 6"><path d="M1 5 L4.5 1.5 L8 5" fill="none" stroke="#c0c0c0" stroke-width="1.1"/></svg>
<svg class="a" style="left:1901.0px;top:942.0px" width="9" height="6" viewBox="0 0 9 6"><path d="M1 1 L4.5 4.5 L8 1" fill="none" stroke="#c0c0c0" stroke-width="1.1"/></svg>
<div class="a" style="left:106px;top:953px;width:1808px;height:18px;background:#f0f0f0;border-bottom:1px solid #a9a9a9"></div>
<svg class="a" style="left:113.0px;top:957.5px" width="6" height="9" viewBox="0 0 6 9"><path d="M5 1 L1.5 4.5 L5 8" fill="none" stroke="#c0c0c0" stroke-width="1.1"/></svg>
<svg class="a" style="left:1886.0px;top:957.5px" width="6" height="9" viewBox="0 0 6 9"><path d="M1 1 L4.5 4.5 L1 8" fill="none" stroke="#c0c0c0" stroke-width="1.1"/></svg>
<div class="a" style="left:106px;top:976px;width:1808px;height:30px;background:#ddf0eb;border-top:1px solid #a9a9a9;border-bottom:1px solid #a9a9a9"></div>
<div class="a t" style="left:735px;top:982.0px;width:40px;height:16px;line-height:16px;text-align:center;font-size:12px;color:#111">0</div>
<div class="a t" style="left:834px;top:982.0px;width:40px;height:16px;line-height:16px;text-align:center;font-size:12px;color:#111">0</div>
<div class="a t" style="left:933px;top:982.0px;width:40px;height:16px;line-height:16px;text-align:center;font-size:12px;color:#111">0</div>
<div class="a t" style="left:1032px;top:982.0px;width:40px;height:16px;line-height:16px;text-align:center;font-size:12px;color:#111">0</div>
<div class="a t" style="left:1132px;top:982.0px;width:40px;height:16px;line-height:16px;text-align:center;font-size:12px;color:#111">0</div>
<div class="a t" style="left:1232px;top:982.0px;width:40px;height:16px;line-height:16px;text-align:center;font-size:12px;color:#111">0</div>
<div class="a t" style="left:1332px;top:982.0px;width:40px;height:16px;line-height:16px;text-align:center;font-size:12px;color:#111">0</div>
<div class="a t" style="left:1432px;top:982.0px;width:40px;height:16px;line-height:16px;text-align:center;font-size:12px;color:#111">0</div>
<div class="a t" style="left:1531px;top:982.0px;width:40px;height:16px;line-height:16px;text-align:center;font-size:12px;color:#111">0</div>
<div class="a t" style="left:1630px;top:982.0px;width:40px;height:16px;line-height:16px;text-align:center;font-size:12px;color:#111">0</div>
<div class="a t" style="left:1730px;top:982.0px;width:40px;height:16px;line-height:16px;text-align:center;font-size:12px;color:#111">0</div>
<div class="a" style="left:100px;top:1012px;width:1820px;height:31px;background:#f6f6f6"></div>
<div class="a" style="left:0px;top:1017px;width:100px;height:26px;background:#f6f6f6"></div>
<div class="a" style="left:3px;top:1019px;width:1914px;height:21px;background:#efebea;border-top:1px solid #a9a9a9;border-right:1px solid #a9a9a9"></div>
<div class="a" style="left:3px;top:1020px;width:100px;height:19px;border-left:1px solid #c0bcbb;border-right:1px solid #fff;border-bottom:1px solid #fff"></div>
<div class="a t" style="left:4px;top:1021.0px;width:93px;height:16px;line-height:16px;text-align:right;font-size:12px;color:#111;overflow:hidden;letter-spacing:-0.3px">1</div>
<div class="a" style="left:102px;top:1020px;width:82px;height:19px;border-left:1px solid #c0bcbb;border-right:1px solid #fff;border-bottom:1px solid #fff"></div>
<div class="a t" style="left:107px;top:1021px;width:74px;height:16px;line-height:16px;font-size:12px;color:#111;overflow:hidden;letter-spacing:-0.3px">무명자</div>
<div class="a" style="left:183px;top:1020px;width:101px;height:19px;border-left:1px solid #c0bcbb;border-right:1px solid #fff;border-bottom:1px solid #fff"></div>
<div class="a t" style="left:188px;top:1021px;width:93px;height:16px;line-height:16px;font-size:12px;color:#111;overflow:hidden;letter-spacing:-0.3px">800811-1******</div>
<div class="a" style="left:283px;top:1020px;width:31px;height:19px;border-left:1px solid #c0bcbb;border-right:1px solid #fff;border-bottom:1px solid #fff"></div>
<div class="a t" style="left:283px;top:1021.0px;width:30px;height:16px;line-height:16px;text-align:center;font-size:12px;color:#111;overflow:hidden;letter-spacing:-0.3px">남</div>
<div class="a" style="left:313px;top:1020px;width:51px;height:19px;border-left:1px solid #c0bcbb;border-right:1px solid #fff;border-bottom:1px solid #fff"></div>
<div class="a t" style="left:314px;top:1021.0px;width:44px;height:16px;line-height:16px;text-align:right;font-size:12px;color:#111;overflow:hidden;letter-spacing:-0.3px">40세</div>
<div class="a" style="left:363px;top:1020px;width:71px;height:19px;border-left:1px solid #c0bcbb;border-right:1px solid #fff;border-bottom:1px solid #fff"></div>
<div class="a t" style="left:364px;top:1021.0px;width:64px;height:16px;line-height:16px;text-align:right;font-size:12px;color:#111;overflow:hidden;letter-spacing:-0.3px">123456789</div>
<div class="a" style="left:433px;top:1020px;width:71px;height:19px;border-left:1px solid #c0bcbb;border-right:1px solid #fff;border-bottom:1px solid #fff"></div>
<div class="a t" style="left:438px;top:1021px;width:63px;height:16px;line-height:16px;font-size:12px;color:#111;overflow:hidden;letter-spacing:-0.3px">건강보험</div>
<div class="a" style="left:503px;top:1020px;width:101px;height:19px;border-left:1px solid #c0bcbb;border-right:1px solid #fff;border-bottom:1px solid #fff"></div>
<div class="a t" style="left:508px;top:1021px;width:93px;height:16px;line-height:16px;font-size:12px;color:#111;overflow:hidden;letter-spacing:-0.3px">사업장명칭test</div>
<div class="a" style="left:603px;top:1020px;width:81px;height:19px;border-left:1px solid #c0bcbb;border-right:1px solid #fff;border-bottom:1px solid #fff"></div>
<div class="a t" style="left:608px;top:1021px;width:73px;height:16px;line-height:16px;font-size:12px;color:#111;overflow:hidden;letter-spacing:-0.3px">112122121212</div>
<div class="a" style="left:683px;top:1020px;width:81px;height:19px;border-left:1px solid #c0bcbb;border-right:1px solid #fff;border-bottom:1px solid #fff"></div>
<div class="a t" style="left:688px;top:1021px;width:73px;height:16px;line-height:16px;font-size:12px;color:#111;overflow:hidden;letter-spacing:-0.3px">테스트</div>
<div class="a" style="left:763px;top:1020px;width:101px;height:19px;border-left:1px solid #c0bcbb;border-right:1px solid #fff;border-bottom:1px solid #fff"></div>
<div class="a t" style="left:768px;top:1021px;width:93px;height:16px;line-height:16px;font-size:12px;color:#111;overflow:hidden;letter-spacing:-0.3px">010-1234-5678</div>
<div class="a" style="left:863px;top:1020px;width:1px;height:19px;background:#c0bcbb"></div>
<div class="a" style="left:0px;top:1039px;width:1920px;height:4px;background:#1c2b3c"></div>
<div class="a" style="left:48px;top:1039px;width:344px;height:4px;background:#e6e6e6"></div>
<div class="a" style="left:786px;top:1039px;width:47px;height:4px;background:#56636b"></div>
<div class="a" style="left:0px;top:0px;width:1920px;height:40px;background:linear-gradient(#fbfbfb,#ebe9e6);border-bottom:1px solid #c9c7c4"></div>
<div class="a t" style="left:15px;top:14.5px;height:16px;line-height:16px;font-weight:bold;font-size:16px;color:#5c5c5c;letter-spacing:0.1px">NixPen 5.0</div>
<div class="a" style="left:107px;top:11px;width:206px;height:22px;background:linear-gradient(#f7f6f5,#e8e6e5);border-radius:11px;box-shadow:inset 0 1px 0 #fff"></div>
<div class="a t" style="left:125px;top:14.0px;height:16px;line-height:16px;font-size:12px;color:#1a1a1a;letter-spacing:1.2px;font-weight:bold">구로스마트안과</div>
<div class="a t" style="left:225px;top:14.0px;height:16px;line-height:16px;font-size:12px;color:#f00000;letter-spacing:0px">미등록사용자</div>
<div class="a" style="left:1525px;top:8px;width:50px;height:22px;background:#53597a;border:1px solid #2d3250;border-radius:2px"></div>
<div class="a t" style="left:1525px;top:11.0px;width:50px;height:16px;line-height:16px;text-align:center;color:#eef;font-size:12px">김지훈</div>
<svg class="a" style="left:1581px;top:5px" width="28" height="28" viewBox="0 0 28 28"><circle cx="14.1" cy="13.6" r="13.6" fill="#ef7070"/><path d="M15.5 6.2 C12 6 10.5 10 11 14.5 M19.4 9.4 C18 13 15 14.5 11 14.5 M11 14.5 C7 15 5 17.5 6 20 C7 22.5 10 22.5 12 21 C14 19.5 15 17 18 17" fill="none" stroke="#111" stroke-width="1.5"/><circle cx="20.1" cy="17" r="2" fill="none" stroke="#111" stroke-width="1.4"/><circle cx="15.5" cy="6.2" r="1.1" fill="#111"/><circle cx="19.4" cy="9.4" r="1.1" fill="#111"/></svg>
<svg class="a" style="left:1612px;top:5px" width="26" height="28" viewBox="0 0 26 28"><circle cx="12.3" cy="6.4" r="5.6" fill="#686868"/><path d="M0.8 26.4 C1.5 19 4 13.5 8 13 L16 13 C18.5 13 20 14.5 21 16.5 L21 26.4 Z" fill="#686868"/><circle cx="18" cy="22.3" r="6.6" fill="#f0efee"/><circle cx="18" cy="22.3" r="4.3" fill="#686868"/><circle cx="18" cy="22.3" r="5.1" fill="none" stroke="#686868" stroke-width="2" stroke-dasharray="1.9 2.1"/><circle cx="18" cy="22.3" r="1.7" fill="#f0efee"/></svg>
<div class="a" style="left:1648px;top:8px;width:65px;height:24px;background:linear-gradient(#ffffff,#f1f1f1);border:1px solid #b9b9b9;border-radius:2px"></div>
<div class="a t" style="left:1648px;top:12.0px;width:65px;height:16px;line-height:16px;text-align:center;color:#1d3a5c;font-size:12px;letter-spacing:0.3px">환경설정</div>
<div class="a" style="left:1718px;top:8px;width:65px;height:24px;background:linear-gradient(#ffffff,#f1f1f1);border:1px solid #b9b9b9;border-radius:2px"></div>
<div class="a t" style="left:1718px;top:12.0px;width:65px;height:16px;line-height:16px;text-align:center;color:#1d3a5c;font-size:12px;letter-spacing:0.3px">화면잠금</div>
<div class="a" style="left:1788px;top:8px;width:65px;height:24px;background:linear-gradient(#ffffff,#f1f1f1);border:1px solid #b9b9b9;border-radius:2px"></div>
<div class="a t" style="left:1788px;top:12.0px;width:65px;height:16px;line-height:16px;text-align:center;color:#1d3a5c;font-size:12px;letter-spacing:0.3px">로그아웃</div>
<div class="a" style="left:1859px;top:11px;width:16px;height:16px;background:linear-gradient(#f8e268,#f2d640 45%,#e6cc00 52%,#ffb810);border:1px solid #b88a10;border-radius:2px"></div>
<div class="a" style="left:1864px;top:19px;width:6px;height:2px;background:#fff"></div>
<div class="a" style="left:1878px;top:11px;width:16px;height:16px;background:linear-gradient(#ffa860,#f8903a 45%,#ee7a10 52%,#ff6000);border:1px solid #b83a20;border-radius:2px"></div>
<div class="a" style="left:1882px;top:14px;width:7px;height:6px;border:1.5px solid #fff"></div>
<div class="a" style="left:1884px;top:17px;width:7px;height:6px;border:1.5px solid #fff;background:#f27a1a"></div>
<div class="a" style="left:1897px;top:11px;width:16px;height:16px;background:linear-gradient(#f06878,#e04858 45%,#c81830 52%,#d82020);border:1px solid #7a2020;border-radius:2px"></div>
<div class="a t" style="left:1897px;top:11.0px;width:16px;height:16px;line-height:16px;text-align:center;color:#fff;font-size:10px">&#x2716;</div>
<div class="a" style="left:0px;top:40px;width:99px;height:100px;background:#b4b4bc"></div>
<svg class="a" style="left:0;top:40px" width="99" height="100" viewBox="0 0 99 100"><path d="M47 16 C36 16 29 24 29 36 C29 46 32 56 37 62 C39 65 41 67 41 70 L41 74 C36 78 24 82 16 86 C9 90 6 96 6 100 L92 100 C92 96 88 90 80 86 C72 82 60 78 56 74 L56 70 C56 67 58 65 60 62 C64 56 66 46 66 36 C66 24 59 16 47 16 Z" fill="#dcdce0"/></svg>
<div class="a" style="left:98px;top:40px;width:2px;height:977px;background:#9a9aa0"></div>
<div class="a" style="left:0px;top:140px;width:99px;height:877px;background:#dde8f4;border-bottom:1px solid #9a9aa0"></div>
<div class="a" style="left:0px;top:140px;width:27px;height:876px;background:#30598a;border-left:1px solid #7a8aa0"></div>
<div class="a" style="left:4px;top:145px;width:23px;height:79px;background:#5d82b2;border-radius:9px 0 0 12px"></div>
<div class="a" style="left:4px;top:145px;width:22px;height:79px;display:flex;align-items:center;justify-content:center;text-align:center;line-height:14px;font-size:12px;color:#f4f7fb">접<br>수</div>
<div class="a" style="left:4px;top:225px;width:24px;height:78px;background:#dde8f4;border-radius:9px 0 0 12px"></div>
<div class="a" style="left:4px;top:225px;width:22px;height:78px;display:flex;align-items:center;justify-content:center;text-align:center;line-height:14px;font-size:12px;color:#5d82b2">원<br>무</div>
<div class="a" style="left:4px;top:305px;width:23px;height:78px;background:#5d82b2;border-radius:9px 0 0 12px"></div>
<div class="a" style="left:4px;top:305px;width:22px;height:78px;display:flex;align-items:center;justify-content:center;text-align:center;line-height:14px;font-size:12px;color:#f4f7fb">진<br>료</div>
<div class="a" style="left:4px;top:385px;width:23px;height:78px;background:#5d82b2;border-radius:9px 0 0 12px"></div>
<div class="a" style="left:4px;top:385px;width:22px;height:78px;display:flex;align-items:center;justify-content:center;text-align:center;line-height:14px;font-size:12px;color:#f4f7fb">지<br>원<br>부<br>서</div>
<div class="a" style="left:4px;top:465px;width:23px;height:78px;background:#5d82b2;border-radius:9px 0 0 12px"></div>
<div class="a" style="left:4px;top:465px;width:22px;height:78px;display:flex;align-items:center;justify-content:center;text-align:center;line-height:14px;font-size:12px;color:#f4f7fb">고<br>객<br>관<br>리</div>
<div class="a" style="left:4px;top:545px;width:23px;height:78px;background:#5d82b2;border-radius:9px 0 0 12px"></div>
<div class="a" style="left:4px;top:545px;width:22px;height:78px;display:flex;align-items:center;justify-content:center;text-align:center;line-height:14px;font-size:12px;color:#f4f7fb">통<br>계</div>
<div class="a" style="left:4px;top:625px;width:23px;height:78px;background:#5d82b2;border-radius:9px 0 0 12px"></div>
<div class="a" style="left:4px;top:625px;width:22px;height:78px;display:flex;align-items:center;justify-content:center;text-align:center;line-height:14px;font-size:12px;color:#f4f7fb">청<br>구</div>
<div class="a" style="left:38px;top:145px;width:50px;height:50px;background:linear-gradient(#d6e4f0,#bfd5e8);border-right:1px solid #5a9ad6;border-bottom:1px solid #5a9ad6"><svg width="50" height="50" viewBox="0 0 50 50"><circle cx="19" cy="28" r="8.8" fill="#1a6fc0"/><circle cx="19" cy="28" r="10.3" fill="none" stroke="#1a6fc0" stroke-width="3.4" stroke-dasharray="4 4.09"/><circle cx="19" cy="28" r="4.6" fill="none" stroke="#fff" stroke-width="2.6"/><circle cx="36" cy="18.5" r="4.6" fill="#7fb33a"/><circle cx="36" cy="18.5" r="5.6" fill="none" stroke="#7fb33a" stroke-width="2.4" stroke-dasharray="2.2 2.2"/><circle cx="36" cy="18.5" r="2.4" fill="none" stroke="#fff" stroke-width="1.6"/></svg></div>
<div class="a t" style="left:30px;top:194.0px;width:66px;height:16px;line-height:16px;text-align:center;color:#2d4a6e;font-size:12px;letter-spacing:-0.2px">기준정보</div>
<div class="a" style="left:38px;top:215px;width:50px;height:50px;background:linear-gradient(#d6e4f0,#bfd5e8);border-right:1px solid #5a9ad6;border-bottom:1px solid #5a9ad6"><svg width="50" height="50" viewBox="0 0 50 50"><circle cx="19" cy="28" r="8.8" fill="#1a6fc0"/><circle cx="19" cy="28" r="10.3" fill="none" stroke="#1a6fc0" stroke-width="3.4" stroke-dasharray="4 4.09"/><circle cx="19" cy="28" r="4.6" fill="none" stroke="#fff" stroke-width="2.6"/><circle cx="36" cy="18.5" r="4.6" fill="#7fb33a"/><circle cx="36" cy="18.5" r="5.6" fill="none" stroke="#7fb33a" stroke-width="2.4" stroke-dasharray="2.2 2.2"/><circle cx="36" cy="18.5" r="2.4" fill="none" stroke="#fff" stroke-width="1.6"/></svg></div>
<div class="a t" style="left:30px;top:264.0px;width:66px;height:16px;line-height:16px;text-align:center;color:#2d4a6e;font-size:12px;letter-spacing:-0.2px">기본자료</div>
<div class="a" style="left:38px;top:285px;width:50px;height:50px;background:linear-gradient(#d6e4f0,#bfd5e8);border-right:1px solid #5a9ad6;border-bottom:1px solid #5a9ad6"><svg width="50" height="50" viewBox="0 0 50 50"><circle cx="19" cy="28" r="8.8" fill="#1a6fc0"/><circle cx="19" cy="28" r="10.3" fill="none" stroke="#1a6fc0" stroke-width="3.4" stroke-dasharray="4 4.09"/><circle cx="19" cy="28" r="4.6" fill="none" stroke="#fff" stroke-width="2.6"/><circle cx="36" cy="18.5" r="4.6" fill="#7fb33a"/><circle cx="36" cy="18.5" r="5.6" fill="none" stroke="#7fb33a" stroke-width="2.4" stroke-dasharray="2.2 2.2"/><circle cx="36" cy="18.5" r="2.4" fill="none" stroke="#fff" stroke-width="1.6"/></svg></div>
<div class="a t" style="left:30px;top:334.0px;width:66px;height:16px;line-height:16px;text-align:center;color:#2d4a6e;font-size:12px;letter-spacing:-0.2px">청구설정</div>
<div class="a" style="left:38px;top:355px;width:50px;height:50px;background:linear-gradient(#d6e4f0,#bfd5e8);border-right:1px solid #5a9ad6;border-bottom:1px solid #5a9ad6"><svg width="50" height="50" viewBox="0 0 50 50"><circle cx="19" cy="28" r="8.8" fill="#1a6fc0"/><circle cx="19" cy="28" r="10.3" fill="none" stroke="#1a6fc0" stroke-width="3.4" stroke-dasharray="4 4.09"/><circle cx="19" cy="28" r="4.6" fill="none" stroke="#fff" stroke-width="2.6"/><circle cx="36" cy="18.5" r="4.6" fill="#7fb33a"/><circle cx="36" cy="18.5" r="5.6" fill="none" stroke="#7fb33a" stroke-width="2.4" stroke-dasharray="2.2 2.2"/><circle cx="36" cy="18.5" r="2.4" fill="none" stroke="#fff" stroke-width="1.6"/></svg></div>
<div class="a t" style="left:30px;top:404.0px;width:66px;height:16px;line-height:16px;text-align:center;color:#2d4a6e;font-size:12px;letter-spacing:-0.2px">코드뷰</div>
<div class="a" style="left:38px;top:425px;width:50px;height:50px;background:#c6d9ea;border-right:1px solid #5a9ad6;border-bottom:1px solid #5a9ad6"><svg width="50" height="50" viewBox="0 0 50 50"><path d="M18 34 L9.5 42" stroke="#2aa8e2" stroke-width="6.5" stroke-linecap="round"/><path d="M11 39.5 L14 36.5" stroke="#d8f0ff" stroke-width="1"/><circle cx="27" cy="20.5" r="14" fill="#fff" stroke="#1d3550" stroke-width="3.8"/><text x="26" y="26.5" font-size="16" font-weight="bold" text-anchor="middle" fill="#f0a030" font-family="Liberation Sans">$</text></svg></div>
<div class="a t" style="left:30px;top:474.0px;width:66px;height:16px;line-height:16px;text-align:center;color:#2d4a6e;font-size:12px;letter-spacing:-0.2px">수납대장</div>
<div class="a" style="left:38px;top:495px;width:50px;height:50px;background:radial-gradient(circle at 58% 58%,#ffffff 0%,#d6e2ff 22%,#5470c8 48%,#2742a0 70%,#1f3a96 100%)"><svg width="50" height="50" viewBox="0 0 50 50"><path d="M24 22 L40 22 Q42 22 42 24 L42 40 Q42 42 40 42 L24 42" fill="#f4f8ff" stroke="#3aa03a" stroke-width="1.6"/><path d="M30 27.5h9M30 32.7h9M30 37.5h9" stroke="#3aa03a" stroke-width="1.6"/><path d="M9.5 9 Q10.5 6 13 7 L24.5 35 L22.5 39 L20.5 36 Z" fill="#e08a30"/><path d="M9.5 9 Q10.5 6 13 7 L16.5 16 L13 17.5 Z" fill="#707478"/><path d="M11 9 L14.5 16" stroke="#c8ccd0" stroke-width="1"/></svg></div>
<div class="a t" style="left:30px;top:544.0px;width:66px;height:16px;line-height:16px;text-align:center;color:#2d4a6e;font-size:12px;letter-spacing:-0.2px">서류발급</div>
<div class="a" style="left:38px;top:565px;width:50px;height:50px;background:linear-gradient(#d6e4f0,#bfd5e8);border-right:1px solid #5a9ad6;border-bottom:1px solid #5a9ad6"><svg width="50" height="50" viewBox="0 0 50 50"><circle cx="19" cy="28" r="8.8" fill="#1a6fc0"/><circle cx="19" cy="28" r="10.3" fill="none" stroke="#1a6fc0" stroke-width="3.4" stroke-dasharray="4 4.09"/><circle cx="19" cy="28" r="4.6" fill="none" stroke="#fff" stroke-width="2.6"/><circle cx="36" cy="18.5" r="4.6" fill="#7fb33a"/><circle cx="36" cy="18.5" r="5.6" fill="none" stroke="#7fb33a" stroke-width="2.4" stroke-dasharray="2.2 2.2"/><circle cx="36" cy="18.5" r="2.4" fill="none" stroke="#fff" stroke-width="1.6"/></svg></div>
<div class="a t" style="left:30px;top:614.0px;width:66px;height:16px;line-height:16px;text-align:center;color:#2d4a6e;font-size:12px;letter-spacing:-0.2px">관리자</div>
<div class="a" style="left:38px;top:635px;width:50px;height:50px;background:linear-gradient(#d6e4f0,#bfd5e8);border-right:1px solid #5a9ad6;border-bottom:1px solid #5a9ad6"><svg width="50" height="50" viewBox="0 0 50 50"><circle cx="19" cy="28" r="8.8" fill="#1a6fc0"/><circle cx="19" cy="28" r="10.3" fill="none" stroke="#1a6fc0" stroke-width="3.4" stroke-dasharray="4 4.09"/><circle cx="19" cy="28" r="4.6" fill="none" stroke="#fff" stroke-width="2.6"/><circle cx="36" cy="18.5" r="4.6" fill="#7fb33a"/><circle cx="36" cy="18.5" r="5.6" fill="none" stroke="#7fb33a" stroke-width="2.4" stroke-dasharray="2.2 2.2"/><circle cx="36" cy="18.5" r="2.4" fill="none" stroke="#fff" stroke-width="1.6"/></svg></div>
<div class="a t" style="left:30px;top:684.0px;width:66px;height:16px;line-height:16px;text-align:center;color:#2d4a6e;font-size:12px;letter-spacing:-0.2px">시스템</div>
<div class="a" style="left:100px;top:40px;width:1820px;height:49px;background:linear-gradient(#7299c0,#4a70a0 60%,#2f5586)"></div>
<div class="a" style="left:1907px;top:40px;width:13px;height:49px;background:linear-gradient(#4a5f7c,#34485f);border-left:1px solid #8aa0b8"></div>
<div class="a t" style="left:107px;top:56.0px;height:16px;line-height:16px;color:#fff;font-size:12px;letter-spacing:-0.2px">차트번호</div>
<div class="a" style="left:163px;top:54px;width:109px;height:22px;background:#fff;border:1px solid #9aa8b8"></div>
<div class="a t" style="left:169px;top:56.0px;height:16px;line-height:16px;color:#000;font-size:12px">1</div>
<div class="a" style="left:259px;top:61px;width:10px;height:6px;"><svg width="10" height="6" viewBox="0 0 10 6"><path d="M1 1 L4 4 L7 1" fill="none" stroke="#444" stroke-width="1.3"/></svg></div>
<div class="a t" style="left:286px;top:56.0px;height:16px;line-height:16px;color:#fff;font-size:12px;letter-spacing:-0.2px">환자이름</div>
<div class="a" style="left:343px;top:54px;width:109px;height:22px;background:#fff;border:1px solid #9aa8b8"></div>
<div class="a t" style="left:348px;top:56.0px;height:16px;line-height:16px;color:#000;font-size:12px">무명자</div>
<div class="a" style="left:439px;top:61px;width:10px;height:6px;"><svg width="10" height="6" viewBox="0 0 10 6"><path d="M1 1 L4 4 L7 1" fill="none" stroke="#444" stroke-width="1.3"/></svg></div>
<div class="a" style="left:455px;top:53px;width:60px;height:23px;background:#d8dadf;border:1px solid #c0c4ca;border-radius:2px"></div>
<div class="a t" style="left:455px;top:56.0px;width:60px;height:16px;line-height:16px;text-align:center;color:#222;font-weight:bold;font-size:12px">M/40</div>
<div class="a" style="left:519px;top:53px;width:27px;height:23px;background:linear-gradient(#fafafa,#f0f0f0);border:1px solid #c4c8ce;border-radius:3px"><svg width="25" height="21" viewBox="0 0 25 21"><rect x="5" y="3" width="9.5" height="15" rx="1" fill="#4a5a6e"/><rect x="6" y="5" width="7.5" height="5.5" fill="#8ab8f0"/><path d="M6.5 12.5h6M6.5 15h6" stroke="#8a9aaa" stroke-width="1"/><rect x="9.5" y="11" width="10" height="7.5" fill="#f5b42a" stroke="#d8901a" stroke-width="0.7"/><path d="M9.5 11 L14.5 15.5 L19.5 11" fill="none" stroke="#d8901a" stroke-width="0.8"/></svg></div>
<div class="a t" style="left:1468px;top:55.0px;height:16px;line-height:16px;color:#f2f5f9;font-size:12px;">실행</div>
<div class="a t" style="left:1506px;top:55.0px;height:16px;line-height:16px;color:#f2f5f9;font-size:12px;">내역조회</div>
<div class="a t" style="left:1569px;top:55.0px;height:16px;line-height:16px;color:#f2f5f9;font-size:12px;">자료관리</div>
<div class="a t" style="left:1631px;top:55.0px;height:16px;line-height:16px;color:#f2f5f9;font-size:12px;">툴</div>
<div class="a t" style="left:1656px;top:55.0px;height:16px;line-height:16px;color:#f2f5f9;font-size:12px;">업그레이드</div>
<div class="a t" style="left:1730px;top:55.0px;height:16px;line-height:16px;color:#f2f5f9;font-size:12px;">바로가기</div>
<div class="a t" style="left:1793px;top:55.0px;height:16px;line-height:16px;color:#f2f5f9;font-size:12px;">쇼핑몰</div>
<div class="a t" style="left:1842px;top:55.0px;height:16px;line-height:16px;color:#f2f5f9;font-size:12px;font-weight:bold">도움말</div>
<div class="a" style="left:100px;top:89px;width:1820px;height:30px;background:#d0dbe6;border-bottom:1px solid #a8b4c0"></div>
<div class="a" style="left:110px;top:96px;width:6px;height:16px;background:linear-gradient(90deg,#6a6a6a,#c8c8c8 40%,#8a8a8a);border-radius:3px;box-shadow:inset 0 -4px 4px rgba(0,0,0,0.25)"></div>
<div class="a t" style="left:123px;top:96.0px;height:16px;line-height:16px;color:#222;font-size:12px">수납</div>
<div class="a" style="left:151px;top:96px;width:124px;height:16px;background:#e8574a;border-radius:2px"></div>
<div class="a t" style="left:151px;top:96.0px;width:124px;height:16px;line-height:16px;text-align:center;color:#fff;font-size:12px;letter-spacing:0.3px">미수금 : 2,004,580</div>
<div class="a" style="left:733px;top:92px;width:86px;height:26px;background:linear-gradient(#ffffff,#ececec);border:1px solid #a9adb3;border-radius:1px"></div>
<div class="a" style="left:741px;top:97px;width:16px;height:16px;background:#3cc4ff;border-radius:50%"></div>
<div class="a t" style="left:758px;top:96.0px;height:16px;line-height:16px;color:#1b2d4a;font-size:13px;font-weight:bold;letter-spacing:1px">전달메모</div>
<div class="a" style="left:825px;top:92px;width:76px;height:26px;background:linear-gradient(#ffffff,#ececec);border:1px solid #a9adb3;border-radius:1px"></div>
<div class="a t" style="left:825px;top:96.0px;width:76px;height:16px;line-height:16px;text-align:center;color:#1b2d4a;font-size:13px;font-weight:bold;letter-spacing:1px">차트보기</div>
<div class="a" style="left:906px;top:92px;width:72px;height:26px;background:linear-gradient(#ffffff,#ececec);border:1px solid #a9adb3;border-radius:1px"></div>
<div class="a t" style="left:906px;top:96.0px;width:72px;height:16px;line-height:16px;text-align:center;color:#1b2d4a;font-size:13px;font-weight:bold;letter-spacing:1px">진료내역</div>
<div class="a" style="left:983px;top:92px;width:58px;height:26px;background:linear-gradient(#ffffff,#ececec);border:1px solid #a9adb3;border-radius:1px"></div>
<div class="a t" style="left:983px;top:96.0px;width:58px;height:16px;line-height:16px;text-align:center;color:#1b2d4a;font-size:13px;font-weight:bold;letter-spacing:1px">진단서</div>
<div class="a" style="left:1047px;top:92px;width:105px;height:26px;background:linear-gradient(#ffffff,#ececec);border:1px solid #a9adb3;border-radius:1px"></div>
<div class="a t" style="left:1047px;top:96.0px;width:105px;height:16px;line-height:16px;text-align:center;color:#1b2d4a;font-size:13px;font-weight:bold;letter-spacing:1px">환자 상세정보</div>
<div class="a" style="left:1157px;top:92px;width:141px;height:26px;background:linear-gradient(#ffffff,#ececec);border:1px solid #a9adb3;border-radius:1px"></div>
<div class="a t" style="left:1157px;top:96.0px;width:141px;height:16px;line-height:16px;text-align:center;color:#1b2d4a;font-size:13px;font-weight:bold;letter-spacing:1px">진료비 납입 확인서</div>
<div class="a" style="left:1304px;top:92px;width:108px;height:26px;background:linear-gradient(#ffffff,#ececec);border:1px solid #a9adb3;border-radius:1px"></div>
<div class="a t" style="left:1304px;top:96.0px;width:108px;height:16px;line-height:16px;text-align:center;color:#1b2d4a;font-size:13px;font-weight:bold;letter-spacing:1px">진료비 내역서</div>
<div class="a" style="left:1418px;top:92px;width:115px;height:26px;background:linear-gradient(#ffffff,#ececec);border:1px solid #a9adb3;border-radius:1px"></div>
<div class="a t" style="left:1418px;top:96.0px;width:115px;height:16px;line-height:16px;text-align:center;color:#1b2d4a;font-size:13px;font-weight:bold;letter-spacing:1px">수납 계획 입력</div>
<div class="a" style="left:1539px;top:92px;width:75px;height:26px;background:linear-gradient(#ffffff,#ececec);border:1px solid #a9adb3;border-radius:1px"></div>
<div class="a t" style="left:1539px;top:96.0px;width:75px;height:16px;line-height:16px;text-align:center;color:#1b2d4a;font-size:13px;font-weight:bold;letter-spacing:1px">물품내역</div>
<div class="a" style="left:1620px;top:92px;width:80px;height:26px;background:linear-gradient(#ffffff,#ececec);border:1px solid #a9adb3;border-radius:1px"></div>
<div class="a t" style="left:1620px;top:96.0px;width:80px;height:16px;line-height:16px;text-align:center;color:#1b2d4a;font-size:13px;font-weight:bold;letter-spacing:1px">상세내역</div>
<div class="a" style="left:1700px;top:92px;width:91px;height:26px;background:linear-gradient(#ffffff,#ececec);border:2px solid #e0182a;border-radius:1px"></div>
<div class="a t" style="left:1700px;top:96.0px;width:91px;height:16px;line-height:16px;text-align:center;color:#1b2d4a;font-size:13px;font-weight:bold;letter-spacing:1px">진료비내역</div>
<div class="a" style="left:1795px;top:92px;width:75px;height:26px;background:linear-gradient(#ffffff,#ececec);border:1px solid #a9adb3;border-radius:1px"></div>
<div class="a t" style="left:1795px;top:96.0px;width:75px;height:16px;line-height:16px;text-align:center;color:#1b2d4a;font-size:13px;font-weight:bold;letter-spacing:1px">수납대장</div>
<div class="a" style="left:1876px;top:92px;width:28px;height:26px;background:linear-gradient(#ffffff,#ececec);border:1px solid #a9adb3;border-radius:1px"></div>
<div class="a t" style="left:1876px;top:96.0px;width:28px;height:16px;line-height:16px;text-align:center;color:#1b2d4a;font-size:13px;font-weight:bold;letter-spacing:1px">&#183; &#183; &#183;</div>
<div class="a" style="left:485px;top:245px;width:947px;height:551px;background:#fff;border:2.5px solid #ee0f1a;box-shadow:3px 4px 14px rgba(0,0,0,0.28),-2px 0 8px rgba(0,0,0,0.12)"></div>
<div class="a" style="left:1432px;top:246px;width:1.2px;height:547px;background:#50585c"></div>
<div class="a" style="left:487px;top:791.5px;width:946px;height:1.2px;background:#50585c"></div>
<svg class="a" style="left:491px;top:253px" width="17" height="11" viewBox="0 0 17 11"><rect x="0.5" y="0.5" width="14" height="10" fill="#fff" stroke="#777"/><rect x="3" y="4" width="2" height="5" fill="#3a7ad0"/><rect x="6" y="3" width="2" height="6" fill="#e04040"/><rect x="9" y="5" width="2" height="4" fill="#40a040"/><path d="M15 5 L17 5" stroke="#777"/></svg>
<div class="a t" style="left:512px;top:249.0px;height:16px;line-height:16px;font-size:12px;color:#111">진료비 수납내역</div>
<svg class="a" style="left:1410px;top:252px" width="13" height="13" viewBox="0 0 13 13"><path d="M1.5 1.5 L11.5 11.5 M11.5 1.5 L1.5 11.5" stroke="#111" stroke-width="1.2"/></svg>
<div class="a" style="left:487px;top:270px;width:943px;height:41px;background:#e4e7ec;border-bottom:1px solid #c6c9ce"></div>
<div class="a t" style="left:498px;top:282.0px;height:16px;line-height:16px;font-size:12px;color:#555;letter-spacing:0.4px">진료비 수납내역을 확인할 수 있습니다.</div>
<div class="a" style="left:1342px;top:279px;width:80px;height:24px;background:linear-gradient(#fffaf0,#faefd8);border:1px solid #d9b87a;border-radius:2px"></div>
<svg class="a" style="left:1357px;top:281px" width="19" height="18" viewBox="0 0 19 18"><defs><linearGradient id="pg" x1="0" y1="0" x2="0" y2="1"><stop offset="0" stop-color="#ffffff"/><stop offset="1" stop-color="#aabbd8"/></linearGradient></defs><path d="M7 2 L16.5 2 L14 8.5 L4 8.5 Z" fill="#eceefa" stroke="#7c80c0" stroke-width="1"/><path d="M9 4h5M8 6h5" stroke="#9aa0d0" stroke-width="0.8"/><path d="M4 8.5 L15 8.5 L17.5 6.5 L17.5 13.5 L15 16 L3 16 Q1.5 16 1.5 14.5 L1.5 11 Q1.5 8.5 4 8.5 Z" fill="url(#pg)" stroke="#4a5a80" stroke-width="1"/><path d="M15 8.5 L15 16" stroke="#4a5a80" stroke-width="0.8"/><circle cx="12" cy="13.5" r="0.9" fill="#2a9a2a"/></svg>
<div class="a t" style="left:1381px;top:283.0px;height:16px;line-height:16px;font-size:12px;font-weight:bold;color:#234f8c;letter-spacing:1px">출력</div>
<div class="a" style="left:498px;top:321px;width:924px;height:461px;background:#fff;border:1px solid #a8a8a8"></div>
<div class="a" style="left:499px;top:322px;width:30px;height:23px;background:#efefe9;border-right:1px solid #c8c8c8;border-bottom:1px solid #a8a8a8"></div>
<div class="a t" style="left:499px;top:325.0px;width:30px;height:16px;line-height:16px;text-align:center;font-size:12px;color:#111"></div>
<div class="a" style="left:529px;top:322px;width:65px;height:23px;background:#efefe9;border-right:1px solid #c8c8c8;border-bottom:1px solid #a8a8a8"></div>
<div class="a t" style="left:529px;top:325.0px;width:65px;height:16px;line-height:16px;text-align:center;font-size:12px;color:#111">수납구분</div>
<div class="a" style="left:594px;top:322px;width:75px;height:23px;background:#efefe9;border-right:1px solid #c8c8c8;border-bottom:1px solid #a8a8a8"></div>
<div class="a t" style="left:594px;top:325.0px;width:75px;height:16px;line-height:16px;text-align:center;font-size:12px;color:#111">발생구분</div>
<div class="a" style="left:669px;top:322px;width:70px;height:23px;background:#efefe9;border-right:1px solid #c8c8c8;border-bottom:1px solid #a8a8a8"></div>
<div class="a t" style="left:669px;top:325.0px;width:70px;height:16px;line-height:16px;text-align:center;font-size:12px;color:#111">수납일자</div>
<div class="a" style="left:739px;top:322px;width:70px;height:23px;background:#efefe9;border-right:1px solid #c8c8c8;border-bottom:1px solid #a8a8a8"></div>
<div class="a t" style="left:739px;top:325.0px;width:70px;height:16px;line-height:16px;text-align:center;font-size:12px;color:#111">발생일자</div>
<div class="a" style="left:809px;top:322px;width:100px;height:23px;background:#efefe9;border-right:1px solid #c8c8c8;border-bottom:1px solid #a8a8a8"></div>
<div class="a t" style="left:809px;top:325.0px;width:100px;height:16px;line-height:16px;text-align:center;font-size:12px;color:#111">수납과</div>
<div class="a" style="left:909px;top:322px;width:99px;height:23px;background:#efefe9;border-right:1px solid #c8c8c8;border-bottom:1px solid #a8a8a8"></div>
<div class="a t" style="left:909px;top:325.0px;width:99px;height:16px;line-height:16px;text-align:center;font-size:12px;color:#111">수납대상액</div>
<div class="a" style="left:1008px;top:322px;width:99px;height:23px;background:#efefe9;border-right:1px solid #c8c8c8;border-bottom:1px solid #a8a8a8"></div>
<div class="a t" style="left:1008px;top:325.0px;width:99px;height:16px;line-height:16px;text-align:center;font-size:12px;color:#111">수납금액</div>
<div class="a" style="left:1107px;top:322px;width:99px;height:23px;background:#efefe9;border-right:1px solid #c8c8c8;border-bottom:1px solid #a8a8a8"></div>
<div class="a t" style="left:1107px;top:325.0px;width:99px;height:16px;line-height:16px;text-align:center;font-size:12px;color:#111">발생액</div>
<div class="a" style="left:1206px;top:322px;width:98px;height:23px;background:#efefe9;border-right:1px solid #c8c8c8;border-bottom:1px solid #a8a8a8"></div>
<div class="a t" style="left:1206px;top:325.0px;width:98px;height:16px;line-height:16px;text-align:center;font-size:12px;color:#111">미수잔액</div>
<div class="a" style="left:1304px;top:322px;width:99px;height:23px;background:#efefe9;border-right:1px solid #c8c8c8;border-bottom:1px solid #a8a8a8"></div>
<div class="a t" style="left:1304px;top:325.0px;width:99px;height:16px;line-height:16px;text-align:center;font-size:12px;color:#111">환불잔액</div>
<div class="a" style="left:1403px;top:322px;width:18px;height:23px;background:#efefe9;border-right:1px solid #c8c8c8;border-bottom:1px solid #a8a8a8"></div>
<div class="a t" style="left:1403px;top:325.0px;width:18px;height:16px;line-height:16px;text-align:center;font-size:12px;color:#111"></div>
<div class="a" style="left:529px;top:345px;width:874px;height:23px;background:#f6eeac;border-bottom:1px solid #fff"></div>
<div class="a t" style="left:534px;top:348.0px;height:16px;line-height:16px;font-size:12px;color:#111">진료비</div>
<div class="a t" style="left:599px;top:348.0px;height:16px;line-height:16px;font-size:12px;color:#111">보험</div>
<div class="a t" style="left:674px;top:348.0px;height:16px;line-height:16px;font-size:12px;color:#111;letter-spacing:-0.2px">2020-12-09</div>
<div class="a t" style="left:814px;top:348.0px;height:16px;line-height:16px;font-size:12px;color:#111">내과</div>
<div class="a t" style="left:804px;top:348.0px;width:200px;height:16px;line-height:16px;text-align:right;font-size:12px;color:#111;letter-spacing:-0.2px">3,400</div>
<div class="a t" style="left:903px;top:348.0px;width:200px;height:16px;line-height:16px;text-align:right;font-size:12px;color:#111;letter-spacing:-0.2px">0</div>
<div class="a t" style="left:1100px;top:348.0px;width:200px;height:16px;line-height:16px;text-align:right;font-size:12px;color:#111;letter-spacing:-0.2px">3,400</div>
<div class="a t" style="left:1199px;top:348.0px;width:200px;height:16px;line-height:16px;text-align:right;font-size:12px;color:#111;letter-spacing:-0.2px">0</div>
<div class="a" style="left:529px;top:368px;width:874px;height:23px;background:#f6eeac;border-bottom:1px solid #fff"></div>
<div class="a t" style="left:534px;top:371.0px;height:16px;line-height:16px;font-size:12px;color:#111">진료비</div>
<div class="a t" style="left:599px;top:371.0px;height:16px;line-height:16px;font-size:12px;color:#111">보험</div>
<div class="a t" style="left:674px;top:371.0px;height:16px;line-height:16px;font-size:12px;color:#111;letter-spacing:-0.2px">2020-12-07</div>
<div class="a t" style="left:814px;top:371.0px;height:16px;line-height:16px;font-size:12px;color:#111">내과</div>
<div class="a t" style="left:804px;top:371.0px;width:200px;height:16px;line-height:16px;text-align:right;font-size:12px;color:#111;letter-spacing:-0.2px">3,400</div>
<div class="a t" style="left:903px;top:371.0px;width:200px;height:16px;line-height:16px;text-align:right;font-size:12px;color:#111;letter-spacing:-0.2px">0</div>
<div class="a t" style="left:1100px;top:371.0px;width:200px;height:16px;line-height:16px;text-align:right;font-size:12px;color:#111;letter-spacing:-0.2px">3,400</div>
<div class="a t" style="left:1199px;top:371.0px;width:200px;height:16px;line-height:16px;text-align:right;font-size:12px;color:#111;letter-spacing:-0.2px">0</div>
<div class="a" style="left:529px;top:391px;width:874px;height:23px;background:#f6eeac;border-bottom:1px solid #fff"></div>
<div class="a t" style="left:534px;top:394.0px;height:16px;line-height:16px;font-size:12px;color:#111">진료비</div>
<div class="a t" style="left:599px;top:394.0px;height:16px;line-height:16px;font-size:12px;color:#111">보험</div>
<div class="a t" style="left:674px;top:394.0px;height:16px;line-height:16px;font-size:12px;color:#111;letter-spacing:-0.2px">2020-11-23</div>
<div class="a t" style="left:814px;top:394.0px;height:16px;line-height:16px;font-size:12px;color:#111">내과</div>
<div class="a t" style="left:804px;top:394.0px;width:200px;height:16px;line-height:16px;text-align:right;font-size:12px;color:#111;letter-spacing:-0.2px">134,200</div>
<div class="a t" style="left:903px;top:394.0px;width:200px;height:16px;line-height:16px;text-align:right;font-size:12px;color:#111;letter-spacing:-0.2px">0</div>
<div class="a t" style="left:1100px;top:394.0px;width:200px;height:16px;line-height:16px;text-align:right;font-size:12px;color:#111;letter-spacing:-0.2px">134,200</div>
<div class="a t" style="left:1199px;top:394.0px;width:200px;height:16px;line-height:16px;text-align:right;font-size:12px;color:#111;letter-spacing:-0.2px">0</div>
<div class="a" style="left:529px;top:414px;width:874px;height:23px;background:#f6eeac;border-bottom:1px solid #fff"></div>
<div class="a t" style="left:534px;top:417.0px;height:16px;line-height:16px;font-size:12px;color:#111">진료비</div>
<div class="a t" style="left:599px;top:417.0px;height:16px;line-height:16px;font-size:12px;color:#111">비보험</div>
<div class="a t" style="left:674px;top:417.0px;height:16px;line-height:16px;font-size:12px;color:#111;letter-spacing:-0.2px">2020-11-23</div>
<div class="a t" style="left:814px;top:417.0px;height:16px;line-height:16px;font-size:12px;color:#111">내과</div>
<div class="a t" style="left:804px;top:417.0px;width:200px;height:16px;line-height:16px;text-align:right;font-size:12px;color:#111;letter-spacing:-0.2px">52,000</div>
<div class="a t" style="left:903px;top:417.0px;width:200px;height:16px;line-height:16px;text-align:right;font-size:12px;color:#111;letter-spacing:-0.2px">0</div>
<div class="a t" style="left:1100px;top:417.0px;width:200px;height:16px;line-height:16px;text-align:right;font-size:12px;color:#111;letter-spacing:-0.2px">52,000</div>
<div class="a t" style="left:1199px;top:417.0px;width:200px;height:16px;line-height:16px;text-align:right;font-size:12px;color:#111;letter-spacing:-0.2px">0</div>
<div class="a" style="left:529px;top:437px;width:874px;height:23px;background:#f6eeac;border-bottom:1px solid #fff"></div>
<div class="a t" style="left:534px;top:440.0px;height:16px;line-height:16px;font-size:12px;color:#111">진료비</div>
<div class="a t" style="left:599px;top:440.0px;height:16px;line-height:16px;font-size:12px;color:#111">보험</div>
<div class="a t" style="left:674px;top:440.0px;height:16px;line-height:16px;font-size:12px;color:#111;letter-spacing:-0.2px">2020-11-19</div>
<div class="a t" style="left:814px;top:440.0px;height:16px;line-height:16px;font-size:12px;color:#111">내과</div>
<div class="a t" style="left:804px;top:440.0px;width:200px;height:16px;line-height:16px;text-align:right;font-size:12px;color:#111;letter-spacing:-0.2px">700,000</div>
<div class="a t" style="left:903px;top:440.0px;width:200px;height:16px;line-height:16px;text-align:right;font-size:12px;color:#111;letter-spacing:-0.2px">0</div>
<div class="a t" style="left:1100px;top:440.0px;width:200px;height:16px;line-height:16px;text-align:right;font-size:12px;color:#111;letter-spacing:-0.2px">700,000</div>
<div class="a t" style="left:1199px;top:440.0px;width:200px;height:16px;line-height:16px;text-align:right;font-size:12px;color:#111;letter-spacing:-0.2px">0</div>
<div class="a" style="left:529px;top:460px;width:874px;height:23px;background:#f6eeac;border-bottom:1px solid #fff"></div>
<div class="a t" style="left:534px;top:463.0px;height:16px;line-height:16px;font-size:12px;color:#111">진료비</div>
<div class="a t" style="left:599px;top:463.0px;height:16px;line-height:16px;font-size:12px;color:#111">비보험</div>
<div class="a t" style="left:674px;top:463.0px;height:16px;line-height:16px;font-size:12px;color:#111;letter-spacing:-0.2px">2020-11-19</div>
<div class="a t" style="left:814px;top:463.0px;height:16px;line-height:16px;font-size:12px;color:#111">내과</div>
<div class="a t" style="left:804px;top:463.0px;width:200px;height:16px;line-height:16px;text-align:right;font-size:12px;color:#111;letter-spacing:-0.2px">0</div>
<div class="a t" style="left:903px;top:463.0px;width:200px;height:16px;line-height:16px;text-align:right;font-size:12px;color:#111;letter-spacing:-0.2px">0</div>
<div class="a t" style="left:1100px;top:463.0px;width:200px;height:16px;line-height:16px;text-align:right;font-size:12px;color:#111;letter-spacing:-0.2px">0</div>
<div class="a t" style="left:1199px;top:463.0px;width:200px;height:16px;line-height:16px;text-align:right;font-size:12px;color:#111;letter-spacing:-0.2px">0</div>
<div class="a" style="left:529px;top:483px;width:874px;height:23px;background:#f6eeac;border-bottom:1px solid #fff"></div>
<div class="a t" style="left:534px;top:486.0px;height:16px;line-height:16px;font-size:12px;color:#111">진료비</div>
<div class="a t" style="left:599px;top:486.0px;height:16px;line-height:16px;font-size:12px;color:#111">보험</div>
<div class="a t" style="left:674px;top:486.0px;height:16px;line-height:16px;font-size:12px;color:#111;letter-spacing:-0.2px">2020-11-18</div>
<div class="a t" style="left:814px;top:486.0px;height:16px;line-height:16px;font-size:12px;color:#111">내과</div>
<div class="a t" style="left:804px;top:486.0px;width:200px;height:16px;line-height:16px;text-align:right;font-size:12px;color:#111;letter-spacing:-0.2px">3,700</div>
<div class="a t" style="left:903px;top:486.0px;width:200px;height:16px;line-height:16px;text-align:right;font-size:12px;color:#111;letter-spacing:-0.2px">0</div>
<div class="a t" style="left:1100px;top:486.0px;width:200px;height:16px;line-height:16px;text-align:right;font-size:12px;color:#111;letter-spacing:-0.2px">3,700</div>
<div class="a t" style="left:1199px;top:486.0px;width:200px;height:16px;line-height:16px;text-align:right;font-size:12px;color:#111;letter-spacing:-0.2px">0</div>
<div class="a" style="left:529px;top:506px;width:874px;height:23px;background:#f6eeac;border-bottom:1px solid #fff"></div>
<div class="a t" style="left:534px;top:509.0px;height:16px;line-height:16px;font-size:12px;color:#111">진료비</div>
<div class="a t" style="left:599px;top:509.0px;height:16px;line-height:16px;font-size:12px;color:#111">보험</div>
<div class="a t" style="left:674px;top:509.0px;height:16px;line-height:16px;font-size:12px;color:#111;letter-spacing:-0.2px">2020-11-11</div>
<div class="a t" style="left:814px;top:509.0px;height:16px;line-height:16px;font-size:12px;color:#111">내과</div>
<div class="a t" style="left:804px;top:509.0px;width:200px;height:16px;line-height:16px;text-align:right;font-size:12px;color:#111;letter-spacing:-0.2px">3,400</div>
<div class="a t" style="left:903px;top:509.0px;width:200px;height:16px;line-height:16px;text-align:right;font-size:12px;color:#111;letter-spacing:-0.2px">0</div>
<div class="a t" style="left:1100px;top:509.0px;width:200px;height:16px;line-height:16px;text-align:right;font-size:12px;color:#111;letter-spacing:-0.2px">3,400</div>
<div class="a t" style="left:1199px;top:509.0px;width:200px;height:16px;line-height:16px;text-align:right;font-size:12px;color:#111;letter-spacing:-0.2px">0</div>
<div class="a" style="left:529px;top:529px;width:874px;height:23px;background:#f6eeac;border-bottom:1px solid #fff"></div>
<div class="a t" style="left:534px;top:532.0px;height:16px;line-height:16px;font-size:12px;color:#111">진료비</div>
<div class="a t" style="left:599px;top:532.0px;height:16px;line-height:16px;font-size:12px;color:#111">보험</div>
<div class="a t" style="left:674px;top:532.0px;height:16px;line-height:16px;font-size:12px;color:#111;letter-spacing:-0.2px">2020-11-06</div>
<div class="a t" style="left:814px;top:532.0px;height:16px;line-height:16px;font-size:12px;color:#111">내과</div>
<div class="a t" style="left:804px;top:532.0px;width:200px;height:16px;line-height:16px;text-align:right;font-size:12px;color:#111;letter-spacing:-0.2px">400,600</div>
<div class="a t" style="left:903px;top:532.0px;width:200px;height:16px;line-height:16px;text-align:right;font-size:12px;color:#111;letter-spacing:-0.2px">0</div>
<div class="a t" style="left:1100px;top:532.0px;width:200px;height:16px;line-height:16px;text-align:right;font-size:12px;color:#111;letter-spacing:-0.2px">400,600</div>
<div class="a t" style="left:1199px;top:532.0px;width:200px;height:16px;line-height:16px;text-align:right;font-size:12px;color:#111;letter-spacing:-0.2px">0</div>
<div class="a" style="left:529px;top:552px;width:874px;height:23px;background:#f6eeac;border-bottom:1px solid #fff"></div>
<div class="a t" style="left:534px;top:555.0px;height:16px;line-height:16px;font-size:12px;color:#111">진료비</div>
<div class="a t" style="left:599px;top:555.0px;height:16px;line-height:16px;font-size:12px;color:#111">보험</div>
<div class="a t" style="left:674px;top:555.0px;height:16px;line-height:16px;font-size:12px;color:#111;letter-spacing:-0.2px">2020-11-04</div>
<div class="a t" style="left:814px;top:555.0px;height:16px;line-height:16px;font-size:12px;color:#111">이비인후과</div>
<div class="a t" style="left:804px;top:555.0px;width:200px;height:16px;line-height:16px;text-align:right;font-size:12px;color:#111;letter-spacing:-0.2px">3,400</div>
<div class="a t" style="left:903px;top:555.0px;width:200px;height:16px;line-height:16px;text-align:right;font-size:12px;color:#111;letter-spacing:-0.2px">0</div>
<div class="a t" style="left:1100px;top:555.0px;width:200px;height:16px;line-height:16px;text-align:right;font-size:12px;color:#111;letter-spacing:-0.2px">3,400</div>
<div class="a t" style="left:1199px;top:555.0px;width:200px;height:16px;line-height:16px;text-align:right;font-size:12px;color:#111;letter-spacing:-0.2px">0</div>
<div class="a" style="left:529px;top:575px;width:874px;height:23px;background:#f6eeac;border-bottom:1px solid #fff"></div>
<div class="a t" style="left:534px;top:578.0px;height:16px;line-height:16px;font-size:12px;color:#111">진료비</div>
<div class="a t" style="left:599px;top:578.0px;height:16px;line-height:16px;font-size:12px;color:#111">보험</div>
<div class="a t" style="left:674px;top:578.0px;height:16px;line-height:16px;font-size:12px;color:#111;letter-spacing:-0.2px">2020-10-30</div>
<div class="a t" style="left:814px;top:578.0px;height:16px;line-height:16px;font-size:12px;color:#111">내과</div>
<div class="a t" style="left:804px;top:578.0px;width:200px;height:16px;line-height:16px;text-align:right;font-size:12px;color:#111;letter-spacing:-0.2px">12,100</div>
<div class="a t" style="left:903px;top:578.0px;width:200px;height:16px;line-height:16px;text-align:right;font-size:12px;color:#111;letter-spacing:-0.2px">12,100</div>
<div class="a t" style="left:1100px;top:578.0px;width:200px;height:16px;line-height:16px;text-align:right;font-size:12px;color:#111;letter-spacing:-0.2px">0</div>
<div class="a t" style="left:1199px;top:578.0px;width:200px;height:16px;line-height:16px;text-align:right;font-size:12px;color:#111;letter-spacing:-0.2px">12,100</div>
<div class="a" style="left:529px;top:598px;width:874px;height:23px;background:#f6eeac;border-bottom:1px solid #fff"></div>
<div class="a t" style="left:534px;top:601.0px;height:16px;line-height:16px;font-size:12px;color:#111">진료비</div>
<div class="a t" style="left:599px;top:601.0px;height:16px;line-height:16px;font-size:12px;color:#111">보험</div>
<div class="a t" style="left:674px;top:601.0px;height:16px;line-height:16px;font-size:12px;color:#111;letter-spacing:-0.2px">2020-10-26</div>
<div class="a t" style="left:814px;top:601.0px;height:16px;line-height:16px;font-size:12px;color:#111">내과</div>
<div class="a t" style="left:804px;top:601.0px;width:200px;height:16px;line-height:16px;text-align:right;font-size:12px;color:#111;letter-spacing:-0.2px">12,100</div>
<div class="a t" style="left:903px;top:601.0px;width:200px;height:16px;line-height:16px;text-align:right;font-size:12px;color:#111;letter-spacing:-0.2px">12,100</div>
<div class="a t" style="left:1100px;top:601.0px;width:200px;height:16px;line-height:16px;text-align:right;font-size:12px;color:#111;letter-spacing:-0.2px">0</div>
<div class="a t" style="left:1199px;top:601.0px;width:200px;height:16px;line-height:16px;text-align:right;font-size:12px;color:#111;letter-spacing:-0.2px">12,100</div>
<div class="a" style="left:529px;top:621px;width:874px;height:23px;background:#f6f6f6;border-bottom:1px solid #fff"></div>
<div class="a" style="left:597px;top:623px;width:69px;height:16px;background:#f9a548;border-radius:5px"></div>
<div class="a t" style="left:597px;top:623.0px;width:69px;height:16px;line-height:16px;text-align:center;font-size:12px;color:#fff;letter-spacing:0.5px">불만환불</div>
<div class="a t" style="left:744px;top:624.0px;height:16px;line-height:16px;font-size:12px;color:#111;letter-spacing:-0.2px">2020-10-26</div>
<div class="a t" style="left:814px;top:624.0px;height:16px;line-height:16px;font-size:12px;color:#111">내과</div>
<div class="a t" style="left:1002px;top:624.0px;width:200px;height:16px;line-height:16px;text-align:right;font-size:12px;color:#111;letter-spacing:-0.2px">12,100</div>
<div class="a t" style="left:1100px;top:624.0px;width:200px;height:16px;line-height:16px;text-align:right;font-size:12px;color:#111;letter-spacing:-0.2px">0</div>
<div class="a t" style="left:1199px;top:624.0px;width:200px;height:16px;line-height:16px;text-align:right;font-size:12px;color:#111;letter-spacing:-0.2px">0</div>
<div class="a" style="left:529px;top:644px;width:874px;height:23px;background:#f6f6f6;border-bottom:1px solid #fff"></div>
<div class="a" style="left:597px;top:646px;width:69px;height:16px;background:#5cb85c;border-radius:5px"></div>
<div class="a t" style="left:597px;top:646.0px;width:69px;height:16px;line-height:16px;text-align:center;font-size:12px;color:#fff;letter-spacing:0.5px">환불정산</div>
<div class="a t" style="left:744px;top:647.0px;height:16px;line-height:16px;font-size:12px;color:#111;letter-spacing:-0.2px">2020-10-26</div>
<div class="a t" style="left:814px;top:647.0px;height:16px;line-height:16px;font-size:12px;color:#111">내과</div>
<div class="a t" style="left:1002px;top:647.0px;width:200px;height:16px;line-height:16px;text-align:right;font-size:12px;color:#111;letter-spacing:-0.2px">500</div>
<div class="a t" style="left:1100px;top:647.0px;width:200px;height:16px;line-height:16px;text-align:right;font-size:12px;color:#111;letter-spacing:-0.2px">0</div>
<div class="a t" style="left:1199px;top:647.0px;width:200px;height:16px;line-height:16px;text-align:right;font-size:12px;color:#111;letter-spacing:-0.2px">0</div>
<div class="a" style="left:529px;top:667px;width:874px;height:23px;background:#f6eeac;border-bottom:1px solid #fff"></div>
<div class="a t" style="left:534px;top:670.0px;height:16px;line-height:16px;font-size:12px;color:#111">진료비</div>
<div class="a t" style="left:599px;top:670.0px;height:16px;line-height:16px;font-size:12px;color:#111">비보험</div>
<div class="a t" style="left:674px;top:670.0px;height:16px;line-height:16px;font-size:12px;color:#111;letter-spacing:-0.2px">2020-10-24</div>
<div class="a t" style="left:814px;top:670.0px;height:16px;line-height:16px;font-size:12px;color:#111">내과</div>
<div class="a t" style="left:804px;top:670.0px;width:200px;height:16px;line-height:16px;text-align:right;font-size:12px;color:#111;letter-spacing:-0.2px">14,360</div>
<div class="a t" style="left:903px;top:670.0px;width:200px;height:16px;line-height:16px;text-align:right;font-size:12px;color:#111;letter-spacing:-0.2px">0</div>
<div class="a t" style="left:1100px;top:670.0px;width:200px;height:16px;line-height:16px;text-align:right;font-size:12px;color:#111;letter-spacing:-0.2px">14,360</div>
<div class="a t" style="left:1199px;top:670.0px;width:200px;height:16px;line-height:16px;text-align:right;font-size:12px;color:#111;letter-spacing:-0.2px">0</div>
<div class="a" style="left:529px;top:690px;width:874px;height:23px;background:#f6eeac;border-bottom:1px solid #fff"></div>
<div class="a t" style="left:534px;top:693.0px;height:16px;line-height:16px;font-size:12px;color:#111">진료비</div>
<div class="a t" style="left:599px;top:693.0px;height:16px;line-height:16px;font-size:12px;color:#111">보험</div>
<div class="a t" style="left:674px;top:693.0px;height:16px;line-height:16px;font-size:12px;color:#111;letter-spacing:-0.2px">2020-10-24</div>
<div class="a t" style="left:814px;top:693.0px;height:16px;line-height:16px;font-size:12px;color:#111">내과</div>
<div class="a t" style="left:804px;top:693.0px;width:200px;height:16px;line-height:16px;text-align:right;font-size:12px;color:#111;letter-spacing:-0.2px">6,000</div>
<div class="a t" style="left:903px;top:693.0px;width:200px;height:16px;line-height:16px;text-align:right;font-size:12px;color:#111;letter-spacing:-0.2px">0</div>
<div class="a t" style="left:1100px;top:693.0px;width:200px;height:16px;line-height:16px;text-align:right;font-size:12px;color:#111;letter-spacing:-0.2px">6,000</div>
<div class="a t" style="left:1199px;top:693.0px;width:200px;height:16px;line-height:16px;text-align:right;font-size:12px;color:#111;letter-spacing:-0.2px">0</div>
<div class="a" style="left:529px;top:713px;width:874px;height:23px;background:#f6eeac;border-bottom:1px solid #fff"></div>
<div class="a t" style="left:534px;top:716.0px;height:16px;line-height:16px;font-size:12px;color:#111">진료비</div>
<div class="a t" style="left:599px;top:716.0px;height:16px;line-height:16px;font-size:12px;color:#111">보험</div>
<div class="a t" style="left:674px;top:716.0px;height:16px;line-height:16px;font-size:12px;color:#111;letter-spacing:-0.2px">2020-10-19</div>
<div class="a t" style="left:814px;top:716.0px;height:16px;line-height:16px;font-size:12px;color:#111">내과</div>
<div class="a t" style="left:804px;top:716.0px;width:200px;height:16px;line-height:16px;text-align:right;font-size:12px;color:#111;letter-spacing:-0.2px">3,900</div>
<div class="a t" style="left:903px;top:716.0px;width:200px;height:16px;line-height:16px;text-align:right;font-size:12px;color:#111;letter-spacing:-0.2px">0</div>
<div class="a t" style="left:1100px;top:716.0px;width:200px;height:16px;line-height:16px;text-align:right;font-size:12px;color:#111;letter-spacing:-0.2px">3,900</div>
<div class="a t" style="left:1199px;top:716.0px;width:200px;height:16px;line-height:16px;text-align:right;font-size:12px;color:#111;letter-spacing:-0.2px">0</div>
<div class="a" style="left:529px;top:736px;width:874px;height:23px;background:#f6eeac;border-bottom:1px solid #fff"></div>
<div class="a t" style="left:534px;top:739.0px;height:16px;line-height:16px;font-size:12px;color:#111">진료비</div>
<div class="a t" style="left:599px;top:739.0px;height:16px;line-height:16px;font-size:12px;color:#111">보험</div>
<div class="a t" style="left:674px;top:739.0px;height:16px;line-height:16px;font-size:12px;color:#111;letter-spacing:-0.2px">2020-10-19</div>
<div class="a t" style="left:814px;top:739.0px;height:16px;line-height:16px;font-size:12px;color:#111">내과</div>
<div class="a t" style="left:804px;top:739.0px;width:200px;height:16px;line-height:16px;text-align:right;font-size:12px;color:#111;letter-spacing:-0.2px">3,700</div>
<div class="a t" style="left:903px;top:739.0px;width:200px;height:16px;line-height:16px;text-align:right;font-size:12px;color:#111;letter-spacing:-0.2px">0</div>
<div class="a t" style="left:1100px;top:739.0px;width:200px;height:16px;line-height:16px;text-align:right;font-size:12px;color:#111;letter-spacing:-0.2px">3,700</div>
<div class="a t" style="left:1199px;top:739.0px;width:200px;height:16px;line-height:16px;text-align:right;font-size:12px;color:#111;letter-spacing:-0.2px">0</div>
<div class="a" style="left:529px;top:759px;width:874px;height:6px;background:#f6eeac"></div>
<div class="a" style="left:508px;top:601px;width:12px;height:12px;background:linear-gradient(#c9c9c9,#8d8d8d);border:1px solid #777;border-radius:2px"><div style="position:absolute;left:2px;top:4px;width:6px;height:2px;background:#eef6ff"></div></div>
<div class="a" style="left:1403px;top:345px;width:18px;height:419px;background:#f0f0f0"></div>
<div class="a" style="left:1404px;top:362px;width:17px;height:80px;background:#c8c8c8"></div>
<svg class="a" style="left:1407.5px;top:350.0px" width="9" height="6" viewBox="0 0 9 6"><path d="M1 5 L4.5 1.5 L8 5" fill="none" stroke="#c0c0c0" stroke-width="1.1"/></svg>
<svg class="a" style="left:1407.5px;top:753.0px" width="9" height="6" viewBox="0 0 9 6"><path d="M1 1 L4.5 4.5 L8 1" fill="none" stroke="#c0c0c0" stroke-width="1.1"/></svg>
<div class="a" style="left:499px;top:764px;width:922px;height:17px;background:#f0f0f0"></div>
<svg class="a" style="left:506.0px;top:767.5px" width="6" height="9" viewBox="0 0 6 9"><path d="M5 1 L1.5 4.5 L5 8" fill="none" stroke="#c0c0c0" stroke-width="1.1"/></svg>
<svg class="a" style="left:1393.0px;top:767.5px" width="6" height="9" viewBox="0 0 6 9"><path d="M1 1 L4.5 4.5 L1 8" fill="none" stroke="#c0c0c0" stroke-width="1.1"/></svg>
<div class="a" style="left:445px;top:243px;width:38px;height:38px;background:#d9623d;border-radius:50%;box-shadow:1px 2px 3px rgba(0,0,0,0.35)"></div>
<div class="a t" style="left:445px;top:252.0px;width:38px;height:20px;line-height:20px;text-align:center;font-size:19px;font-weight:bold;color:#fff">2</div>
<div class="a" style="left:1659px;top:85px;width:38px;height:38px;background:#d9623d;border-radius:50%;box-shadow:1px 2px 3px rgba(0,0,0,0.35)"></div>
<div class="a t" style="left:1659px;top:94.0px;width:38px;height:20px;line-height:20px;text-align:center;font-size:19px;font-weight:bold;color:#fff">1</div>
</body></html>
